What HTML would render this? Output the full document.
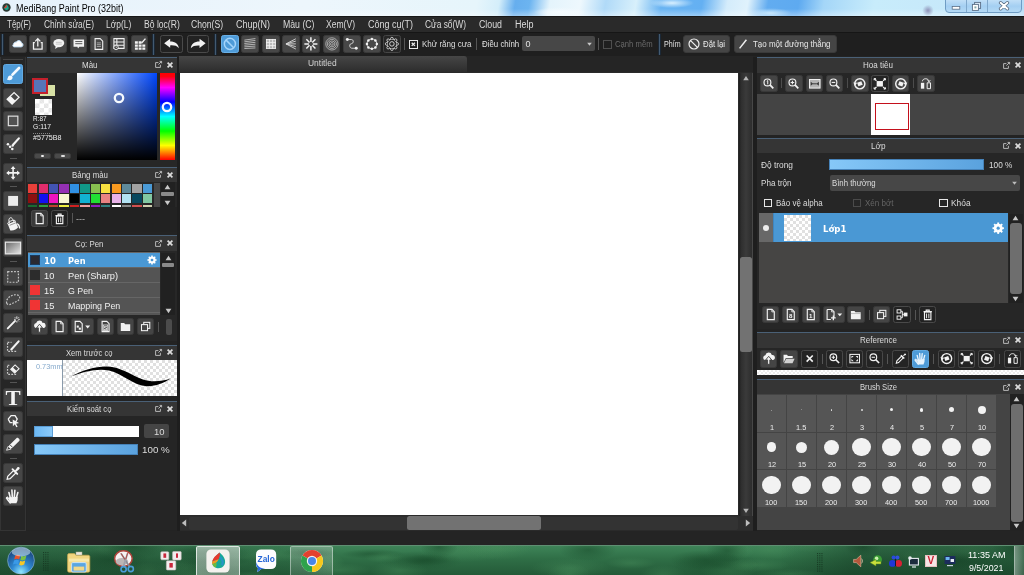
<!DOCTYPE html>
<html lang="vi"><head><meta charset="utf-8"><title>MediBang Paint Pro (32bit)</title>
<style>
html,body{margin:0;padding:0}
body{width:1024px;height:575px;position:relative;overflow:hidden;background:#232323;font-family:"Liberation Sans",sans-serif}
body div,body svg,body span.t{position:absolute;box-sizing:border-box}
span.t{white-space:nowrap;transform-origin:0 50%;display:block}
</style></head><body><div id="w" style="left:0;top:0;width:1024px;height:575px;will-change:transform">
<div style="left:0.00px;top:0.00px;width:1024.00px;height:15.90px;background:linear-gradient(to bottom,rgba(255,255,255,0) 55%,rgba(255,255,255,.35) 100%),radial-gradient(ellipse 26px 5px at 560px 12px,#f4fbff 0,rgba(244,251,255,0) 100%),radial-gradient(ellipse 22px 5px at 672px 3px,#d8efff 0,rgba(216,239,255,0) 100%),radial-gradient(ellipse 22px 5px at 770px 13px,#b8e0fb 0,rgba(184,224,251,0) 100%),linear-gradient(100deg,#e6f2fb 0,#edf6fc 300px,#e6f5fb 470px,#d4eefa 492px,#66aeee 508px,#6cb4f0 522px,#e4f4fc 542px,#eef8fd 572px,#b0daf8 597px,#d8f0fb 627px,#6ab4f2 652px,#64b0f2 692px,#d4ecfb 717px,#e0f2fc 737px,#62acf0 757px,#5eaaf0 787px,#a4d6f8 812px,#c8ecfb 862px,#c6e8fa 942px,#b4daf6 1024px);"></div>
<svg style="left:1.60px;top:3.00px;" width="9.00" height="9.00" viewBox="0 0 10 10"><circle cx="5" cy="5" r="4.6" fill="#2a3a34"/><path d="M5 1.6C7.5 3.4 7.8 5.2 7.2 6.6A2.6 2.6 0 0 1 2.6 6.2C2.4 4.6 3.6 3.4 5 1.6Z" fill="#18a890"/><path d="M5 1.6C3.6 3.4 2.4 4.6 2.6 6.2L5.4 4.6Z" fill="#e83828"/></svg>
<span class="t" style="left:16.30px;top:2.80px;font-size:10px;line-height:12.00px;color:#000;font-family:'Liberation Sans',sans-serif;transform:scaleX(0.8945);">MediBang Paint Pro (32bit)</span>
<div style="left:945.00px;top:-2.00px;width:76.50px;height:14.70px;border:1px solid #6f9cc4;border-radius:0 0 4px 4px;background:linear-gradient(#c6e2f8,#a4cff2 55%,#b4daf6);"></div>
<div style="left:965.60px;top:0.00px;width:1.00px;height:12.00px;background:#7fa8cc;"></div>
<div style="left:987.00px;top:0.00px;width:1.00px;height:12.00px;background:#7fa8cc;"></div>
<svg style="left:951.00px;top:3.00px;" width="10.00" height="8.00" viewBox="0 0 10 8"><rect x="1.2" y="3.4" width="7.6" height="2.8" fill="#fff" stroke="#5a6e86" stroke-width=".8"/></svg>
<svg style="left:971.00px;top:0.50px;" width="11.00" height="11.00" viewBox="0 0 11 11"><rect x="3.6" y="1.4" width="6" height="6" fill="#dceaf8" stroke="#5a6e86" stroke-width=".9"/><rect x="1.4" y="3.4" width="6" height="6" fill="#fff" stroke="#5a6e86" stroke-width=".9"/><rect x="3.4" y="5.4" width="2" height="2" fill="#8aa" /></svg>
<svg style="left:998.00px;top:1.40px;" width="12.00" height="10.00" viewBox="0 0 12 10"><path d="M2.6 1.8L9.4 7.8M9.4 1.8L2.6 7.8" stroke="#56697f" stroke-width="3.4" stroke-linecap="round"/><path d="M2.6 1.8L9.4 7.8M9.4 1.8L2.6 7.8" stroke="#fff" stroke-width="1.9" stroke-linecap="round"/></svg>
<div style="left:922.00px;top:5.00px;width:12.00px;height:11.00px;background:radial-gradient(circle,#8e92b8 0,rgba(142,146,184,0) 70%);"></div>
<div style="left:0.00px;top:15.90px;width:1024.00px;height:17.50px;background:#2a2a2a;"></div>
<div style="left:0.00px;top:15.90px;width:1024.00px;height:0.70px;background:#181818;"></div>
<span class="t" style="left:7.00px;top:19.10px;font-size:10px;line-height:12.00px;color:#dadada;font-family:'Liberation Sans',sans-serif;transform:scaleX(0.8000);">Tệp(F)</span>
<span class="t" style="left:43.70px;top:19.10px;font-size:10px;line-height:12.00px;color:#dadada;font-family:'Liberation Sans',sans-serif;transform:scaleX(0.8404);">Chỉnh sửa(E)</span>
<span class="t" style="left:105.70px;top:19.10px;font-size:10px;line-height:12.00px;color:#dadada;font-family:'Liberation Sans',sans-serif;transform:scaleX(0.8460);">Lớp(L)</span>
<span class="t" style="left:143.70px;top:19.10px;font-size:10px;line-height:12.00px;color:#dadada;font-family:'Liberation Sans',sans-serif;transform:scaleX(0.8590);">Bộ lọc(R)</span>
<span class="t" style="left:191.00px;top:19.10px;font-size:10px;line-height:12.00px;color:#dadada;font-family:'Liberation Sans',sans-serif;transform:scaleX(0.8593);">Chọn(S)</span>
<span class="t" style="left:236.00px;top:19.10px;font-size:10px;line-height:12.00px;color:#dadada;font-family:'Liberation Sans',sans-serif;transform:scaleX(0.8997);">Chụp(N)</span>
<span class="t" style="left:282.50px;top:19.10px;font-size:10px;line-height:12.00px;color:#dadada;font-family:'Liberation Sans',sans-serif;transform:scaleX(0.8722);">Màu (C)</span>
<span class="t" style="left:326.00px;top:19.10px;font-size:10px;line-height:12.00px;color:#dadada;font-family:'Liberation Sans',sans-serif;transform:scaleX(0.8556);">Xem(V)</span>
<span class="t" style="left:367.50px;top:19.10px;font-size:10px;line-height:12.00px;color:#dadada;font-family:'Liberation Sans',sans-serif;transform:scaleX(0.8997);">Công cụ(T)</span>
<span class="t" style="left:425.00px;top:19.10px;font-size:10px;line-height:12.00px;color:#dadada;font-family:'Liberation Sans',sans-serif;transform:scaleX(0.8382);">Cửa sổ(W)</span>
<span class="t" style="left:478.50px;top:19.10px;font-size:10px;line-height:12.00px;color:#dadada;font-family:'Liberation Sans',sans-serif;transform:scaleX(0.8803);">Cloud</span>
<span class="t" style="left:514.50px;top:19.10px;font-size:10px;line-height:12.00px;color:#dadada;font-family:'Liberation Sans',sans-serif;transform:scaleX(0.8995);">Help</span>
<div style="left:0.00px;top:32.20px;width:1024.00px;height:24.00px;background:#1f1f1f;"></div>
<div style="left:0.00px;top:32.20px;width:1024.00px;height:1.20px;background:#161616;"></div>
<div style="left:1.00px;top:34.00px;width:3.20px;height:21.00px;background:#435a70;border-left:1px solid #1b2836;border-right:1px solid #1b2836;"></div>
<div style="left:152.00px;top:34.00px;width:3.20px;height:21.00px;background:#435a70;border-left:1px solid #1b2836;border-right:1px solid #1b2836;"></div>
<div style="left:213.50px;top:34.00px;width:3.20px;height:21.00px;background:#435a70;border-left:1px solid #1b2836;border-right:1px solid #1b2836;"></div>
<div style="left:658.00px;top:34.00px;width:3.20px;height:21.00px;background:#435a70;border-left:1px solid #1b2836;border-right:1px solid #1b2836;"></div>
<div style="left:9.00px;top:35.00px;width:17.60px;height:17.80px;background:#474747;border:1px solid #3a3a3a;border-radius:2.5px;"></div>
<svg style="left:9.00px;top:35.00px;" width="17.60" height="17.80" viewBox="0 0 18 18"><g transform="translate(9 9.2) scale(.8) translate(-9.3 -9)"><path d="M4.6 12.6h9a2.6 2.6 0 0 0 .5-5.1 3.6 3.6 0 0 0-6.8-1A2.6 2.6 0 0 0 4 9a1.9 1.9 0 0 0 .6 3.6z" fill="#fff" stroke="#bcdcf4" stroke-width="1.2"/></g></svg>
<div style="left:29.27px;top:35.00px;width:17.60px;height:17.80px;background:#474747;border:1px solid #3a3a3a;border-radius:2.5px;"></div>
<svg style="left:29.27px;top:35.00px;" width="17.60" height="17.80" viewBox="0 0 18 18"><path d="M6 7.6H4.6V14.4H13.4V7.6H12" fill="none" stroke="#f2f2f2" stroke-width="1.3"/><path d="M9 11.6V4.2M6.4 6.4L9 3.6L11.6 6.4" fill="none" stroke="#f2f2f2" stroke-width="1.3"/></svg>
<div style="left:49.54px;top:35.00px;width:17.60px;height:17.80px;background:#474747;border:1px solid #3a3a3a;border-radius:2.5px;"></div>
<svg style="left:49.54px;top:35.00px;" width="17.60" height="17.80" viewBox="0 0 18 18"><ellipse cx="9" cy="8.2" rx="5.6" ry="4.2" fill="#f2f2f2"/><path d="M6 11l-.8 3.2 3.4-2.4z" fill="#f2f2f2"/><path d="M6 7.4h6M6 9.2h6" stroke="#999" stroke-width=".5"/></svg>
<div style="left:69.81px;top:35.00px;width:17.60px;height:17.80px;background:#474747;border:1px solid #3a3a3a;border-radius:2.5px;"></div>
<svg style="left:69.81px;top:35.00px;" width="17.60" height="17.80" viewBox="0 0 18 18"><path d="M3.6 4.4h10.8v7.4H9.6l-1.4 2-.6-2H3.6z" fill="#f2f2f2"/><path d="M5.4 6.6h7.2M5.4 8.8h7.2" stroke="#555" stroke-width="1"/></svg>
<div style="left:90.08px;top:35.00px;width:17.60px;height:17.80px;background:#474747;border:1px solid #3a3a3a;border-radius:2.5px;"></div>
<svg style="left:90.08px;top:35.00px;" width="17.60" height="17.80" viewBox="0 0 18 18"><path d="M5.2 3.6h5.2l2.6 2.6v8.4H5.2z" fill="none" stroke="#f2f2f2" stroke-width="1.1"/><path d="M7 8h4.2M7 9.8h4.2M7 11.6h4.2" stroke="#ccc" stroke-width=".7"/></svg>
<div style="left:110.35px;top:35.00px;width:17.60px;height:17.80px;background:#474747;border:1px solid #3a3a3a;border-radius:2.5px;"></div>
<svg style="left:110.35px;top:35.00px;" width="17.60" height="17.80" viewBox="0 0 18 18"><path d="M4 3.6h10.4v10H4zM4 7h10.4M4 10.4h10.4M7 3.6v10" fill="none" stroke="#f2f2f2" stroke-width="1.1"/><circle cx="6.2" cy="12.6" r="2.3" fill="#474747" stroke="#f2f2f2" stroke-width=".9"/><path d="M6.2 11.4v1.3h1" stroke="#f2f2f2" stroke-width=".6" fill="none"/></svg>
<div style="left:130.62px;top:35.00px;width:17.60px;height:17.80px;background:#474747;border:1px solid #3a3a3a;border-radius:2.5px;"></div>
<svg style="left:130.62px;top:35.00px;" width="17.60" height="17.80" viewBox="0 0 18 18"><path d="M4 6.4h3v2.4H4zM7.8 6.4h3v2.4h-3zM4 9.6h3V12H4zM7.8 9.6h3V12h-3zM11.6 9.6h3V12h-3zM4 12.8h3v2.2H4zM7.8 12.8h3v2.2h-3zM11.6 12.8h3v2.2h-3z" fill="#f2f2f2"/><path d="M10.8 8.2l4-4.6" stroke="#f2f2f2" stroke-width="1.5"/></svg>
<div style="left:160.00px;top:35.00px;width:22.60px;height:17.80px;background:#222;border:1px solid #4a4a4a;border-radius:2.5px;"></div>
<svg style="left:160.00px;top:35.00px;" width="22.60" height="17.80" viewBox="0 0 24 18"><path d="M4.4 8.4L10.8 3.6V6.4C16.2 6.4 19.6 9 20 13.6 17.8 11 15.2 10.4 10.8 10.6V13.2z" fill="#f2f2f2"/></svg>
<div style="left:186.50px;top:35.00px;width:22.80px;height:17.80px;background:#222;border:1px solid #4a4a4a;border-radius:2.5px;"></div>
<svg style="left:186.50px;top:35.00px;" width="22.80" height="17.80" viewBox="0 0 24 18"><path d="M19.6 8.4L13.2 3.6V6.4C7.8 6.4 4.4 9 4 13.6 6.2 11 8.8 10.4 13.2 10.6V13.2z" fill="#f2f2f2"/></svg>
<div style="left:221.20px;top:35.00px;width:17.80px;height:17.80px;background:#4e9bd8;border:1px solid #6ab0e6;border-radius:2.5px;"></div>
<svg style="left:221.20px;top:35.00px;" width="17.80" height="17.80" viewBox="0 0 18 18"><circle cx="9" cy="9" r="5.6" fill="none" stroke="#a4d4fa" stroke-width="1.5"/><path d="M5.2 5.2l7.6 7.6" stroke="#a4d4fa" stroke-width="1.5"/></svg>
<div style="left:241.47px;top:35.00px;width:17.80px;height:17.80px;background:#474747;border:1px solid #3a3a3a;border-radius:2.5px;"></div>
<svg style="left:241.47px;top:35.00px;" width="17.80" height="17.80" viewBox="0 0 18 18"><path d="M3.4 5.2L14.6 3.6" stroke="#cfcfcf" stroke-width=".8"/><path d="M3.4 6.9L14.6 5.5" stroke="#cfcfcf" stroke-width=".8"/><path d="M3.4 8.6L14.6 7.4" stroke="#cfcfcf" stroke-width=".8"/><path d="M3.4 10.3L14.6 9.299999999999999" stroke="#cfcfcf" stroke-width=".8"/><path d="M3.4 12.0L14.6 11.2" stroke="#cfcfcf" stroke-width=".8"/><path d="M3.4 13.7L14.6 13.1" stroke="#cfcfcf" stroke-width=".8"/></svg>
<div style="left:261.74px;top:35.00px;width:17.80px;height:17.80px;background:#474747;border:1px solid #3a3a3a;border-radius:2.5px;"></div>
<svg style="left:261.74px;top:35.00px;" width="17.80" height="17.80" viewBox="0 0 18 18"><path d="M4.6 4v10" stroke="#f0f0f0" stroke-width=".9"/><path d="M6.1 4v10" stroke="#f0f0f0" stroke-width=".9"/><path d="M7.6 4v10" stroke="#f0f0f0" stroke-width=".9"/><path d="M9.1 4v10" stroke="#f0f0f0" stroke-width=".9"/><path d="M10.6 4v10" stroke="#f0f0f0" stroke-width=".9"/><path d="M12.1 4v10" stroke="#f0f0f0" stroke-width=".9"/><path d="M13.6 4v10" stroke="#f0f0f0" stroke-width=".9"/><path d="M4 4.6h10" stroke="#f0f0f0" stroke-width=".9"/><path d="M4 6.1h10" stroke="#f0f0f0" stroke-width=".9"/><path d="M4 7.6h10" stroke="#f0f0f0" stroke-width=".9"/><path d="M4 9.1h10" stroke="#f0f0f0" stroke-width=".9"/><path d="M4 10.6h10" stroke="#f0f0f0" stroke-width=".9"/><path d="M4 12.1h10" stroke="#f0f0f0" stroke-width=".9"/><path d="M4 13.6h10" stroke="#f0f0f0" stroke-width=".9"/></svg>
<div style="left:282.01px;top:35.00px;width:17.80px;height:17.80px;background:#474747;border:1px solid #3a3a3a;border-radius:2.5px;"></div>
<svg style="left:282.01px;top:35.00px;" width="17.80" height="17.80" viewBox="0 0 18 18"><path d="M4 9L14 3.8M4 9L14 6.2M4 9L14 9M4 9L14 11.8M4 9L14 14.2" stroke="#d8d8d8" stroke-width=".9"/></svg>
<div style="left:302.28px;top:35.00px;width:17.80px;height:17.80px;background:#474747;border:1px solid #3a3a3a;border-radius:2.5px;"></div>
<svg style="left:302.28px;top:35.00px;" width="17.80" height="17.80" viewBox="0 0 18 18"><path d="M9 2.4V7M9 11v4.6M2.4 9H7M11 9h4.6M4.4 4.4l3.2 3.2M10.4 10.4L13.6 13.6M13.6 4.4l-3.2 3.2M7.6 10.4L4.4 13.6" stroke="#f2f2f2" stroke-width="1.5"/></svg>
<div style="left:322.55px;top:35.00px;width:17.80px;height:17.80px;background:#474747;border:1px solid #3a3a3a;border-radius:2.5px;"></div>
<svg style="left:322.55px;top:35.00px;" width="17.80" height="17.80" viewBox="0 0 18 18"><circle cx="9" cy="9" r="1.4" fill="none" stroke="#d0d0d0" stroke-width=".7"/><circle cx="9" cy="9" r="3" fill="none" stroke="#d0d0d0" stroke-width=".7"/><circle cx="9" cy="9" r="4.6" fill="none" stroke="#d0d0d0" stroke-width=".7"/><circle cx="9" cy="9" r="6.2" fill="none" stroke="#d0d0d0" stroke-width=".7"/></svg>
<div style="left:342.82px;top:35.00px;width:17.80px;height:17.80px;background:#474747;border:1px solid #3a3a3a;border-radius:2.5px;"></div>
<svg style="left:342.82px;top:35.00px;" width="17.80" height="17.80" viewBox="0 0 18 18"><path d="M4.6 4.6H8.6C11 4.6 11 8.8 8.4 8.8 6 8.8 6.4 13.4 9 13.4H13" fill="none" stroke="#e0e0e0" stroke-width=".9"/><circle cx="4.4" cy="4.6" r="1.5" fill="#f2f2f2"/><circle cx="13.4" cy="13.4" r="1.5" fill="#f2f2f2"/></svg>
<div style="left:363.09px;top:35.00px;width:17.80px;height:17.80px;background:#474747;border:1px solid #3a3a3a;border-radius:2.5px;"></div>
<svg style="left:363.09px;top:35.00px;" width="17.80" height="17.80" viewBox="0 0 18 18"><circle cx="9" cy="9" r="5" fill="none" stroke="#e0e0e0" stroke-width=".9"/><circle cx="14.00" cy="9.00" r="1.25" fill="#f2f2f2"/><circle cx="12.54" cy="12.54" r="1.25" fill="#f2f2f2"/><circle cx="9.00" cy="14.00" r="1.25" fill="#f2f2f2"/><circle cx="5.46" cy="12.54" r="1.25" fill="#f2f2f2"/><circle cx="4.00" cy="9.00" r="1.25" fill="#f2f2f2"/><circle cx="5.46" cy="5.46" r="1.25" fill="#f2f2f2"/><circle cx="9.00" cy="4.00" r="1.25" fill="#f2f2f2"/><circle cx="12.54" cy="5.46" r="1.25" fill="#f2f2f2"/></svg>
<div style="left:383.36px;top:35.00px;width:17.80px;height:17.80px;background:#262626;border:1px solid #454545;border-radius:2.5px;"></div>
<svg style="left:383.36px;top:35.00px;" width="17.80" height="17.80" viewBox="0 0 18 18"><circle cx="9" cy="9" r="4.9" fill="none" stroke="#e4e4e4" stroke-width=".9"/><circle cx="14.30" cy="9.00" r="1.35" fill="#262626" stroke="#e4e4e4" stroke-width=".8"/><circle cx="12.75" cy="12.75" r="1.35" fill="#262626" stroke="#e4e4e4" stroke-width=".8"/><circle cx="9.00" cy="14.30" r="1.35" fill="#262626" stroke="#e4e4e4" stroke-width=".8"/><circle cx="5.25" cy="12.75" r="1.35" fill="#262626" stroke="#e4e4e4" stroke-width=".8"/><circle cx="3.70" cy="9.00" r="1.35" fill="#262626" stroke="#e4e4e4" stroke-width=".8"/><circle cx="5.25" cy="5.25" r="1.35" fill="#262626" stroke="#e4e4e4" stroke-width=".8"/><circle cx="9.00" cy="3.70" r="1.35" fill="#262626" stroke="#e4e4e4" stroke-width=".8"/><circle cx="12.75" cy="5.25" r="1.35" fill="#262626" stroke="#e4e4e4" stroke-width=".8"/><circle cx="9" cy="9" r="4.2" fill="#262626"/><circle cx="9" cy="9" r="2.3" fill="none" stroke="#e4e4e4" stroke-width=".9"/></svg>
<div style="left:404.40px;top:38.00px;width:1.00px;height:12.00px;background:#555;"></div>
<div style="left:409.00px;top:40.00px;width:8.60px;height:8.60px;border:1px solid #e8e8e8;background:transparent;"></div>
<svg style="left:409.00px;top:40.00px;" width="8.60" height="8.60" viewBox="0 0 8.6 8.6"><path d="M2.7 2.7L5.9 5.9M5.9 2.7L2.7 5.9" stroke="#e8e8e8" stroke-width="1.3"/></svg>
<span class="t" style="left:421.50px;top:38.90px;font-size:9px;line-height:10.80px;color:#dcdcdc;font-family:'Liberation Sans',sans-serif;transform:scaleX(0.8906);">Khử răng cưa</span>
<div style="left:475.60px;top:38.00px;width:1.00px;height:12.00px;background:#555;"></div>
<span class="t" style="left:481.60px;top:38.90px;font-size:9px;line-height:10.80px;color:#e0e0e0;font-family:'Liberation Sans',sans-serif;transform:scaleX(0.8747);">Điều chỉnh</span>
<div style="left:522.40px;top:35.50px;width:72.60px;height:15.80px;background:#474747;border-radius:2px;"></div>
<span class="t" style="left:525.50px;top:38.90px;font-size:9px;line-height:10.80px;color:#e0e0e0;font-family:'Liberation Sans',sans-serif;transform:scaleX(1.0000);">0</span>
<svg style="left:585.50px;top:42.00px;" width="7.00" height="5.00" viewBox="0 0 7 5"><path d="M1.2 .8h4.6L3.5 3.8z" fill="#c8c8c8"/></svg>
<div style="left:598.00px;top:38.00px;width:1.00px;height:12.00px;background:#555;"></div>
<div style="left:603.00px;top:40.00px;width:8.60px;height:8.60px;border:1px solid #4e4e4e;background:transparent;"></div>
<span class="t" style="left:615.40px;top:38.90px;font-size:9px;line-height:10.80px;color:#686868;font-family:'Liberation Sans',sans-serif;transform:scaleX(0.8542);">Cạnh mềm</span>
<span class="t" style="left:664.00px;top:38.90px;font-size:9px;line-height:10.80px;color:#e0e0e0;font-family:'Liberation Sans',sans-serif;transform:scaleX(0.7902);">Phím</span>
<div style="left:682.70px;top:35.00px;width:47.70px;height:17.80px;background:#454545;border-radius:3px;border:1px solid #3a3a3a;"></div>
<svg style="left:686.50px;top:37.00px;" width="14.00" height="14.00" viewBox="0 0 14 14"><circle cx="7" cy="7" r="5" fill="none" stroke="#eee" stroke-width="1.2"/><path d="M3.6 3.6l6.8 6.8" stroke="#eee" stroke-width="1.2"/></svg>
<span class="t" style="left:702.50px;top:38.90px;font-size:9px;line-height:10.80px;color:#e8e8e8;font-family:'Liberation Sans',sans-serif;transform:scaleX(0.8663);">Đặt lại</span>
<div style="left:734.00px;top:35.00px;width:102.80px;height:17.80px;background:#454545;border-radius:3px;border:1px solid #3a3a3a;"></div>
<svg style="left:738.00px;top:38.00px;" width="10.00" height="12.00" viewBox="0 0 10 12"><path d="M1.6 10.4L8.4 1.8" stroke="#f0f0f0" stroke-width="1.5"/></svg>
<span class="t" style="left:752.50px;top:38.90px;font-size:9px;line-height:10.80px;color:#e8e8e8;font-family:'Liberation Sans',sans-serif;transform:scaleX(0.8859);">Tạo một đường thẳng</span>
<div style="left:0.00px;top:56.50px;width:1024.00px;height:474.00px;background:#232323;"></div>
<div style="left:0.00px;top:56.50px;width:26.00px;height:474.00px;background:#262626;border:1px solid #343434;border-top:none;"></div>
<div style="left:3.00px;top:59.30px;width:20.00px;height:1.00px;background:#444;"></div>
<div style="left:3.00px;top:64.30px;width:20.20px;height:19.80px;background:#4e9bd8;border:1px solid #62aae2;border-radius:2.5px;"></div>
<svg style="left:3.00px;top:64.30px;" width="20.20" height="19.80" viewBox="0 0 20 20"><path d="M16 4L9.4 10.8" stroke="#f4faff" stroke-width="2.7" stroke-linecap="round"/><path d="M3.8 15.6c.8-.6.8-1.6 1.2-2.6.6-1.6 2.6-2 3.8-.8 1.2 1.2.8 3-.6 3.8-1.4.6-3 .4-4.4-.4z" fill="#f4faff"/></svg>
<div style="left:3.00px;top:87.90px;width:20.20px;height:19.80px;background:#464646;border:1px solid #393939;border-radius:2.5px;"></div>
<svg style="left:3.00px;top:87.90px;" width="20.20" height="19.80" viewBox="0 0 20 20"><path d="M4 11.4L11 4.6L16 9.4L9 16.2z" fill="none" stroke="#f4f4f4" stroke-width="1.3"/><path d="M4 11.4L7.4 8.2L12.4 13L9 16.2z" fill="#f4f4f4"/></svg>
<div style="left:3.00px;top:111.20px;width:20.20px;height:19.80px;background:#464646;border:1px solid #393939;border-radius:2.5px;"></div>
<svg style="left:3.00px;top:111.20px;" width="20.20" height="19.80" viewBox="0 0 20 20"><rect x="5.2" y="5.2" width="9.6" height="9.6" fill="#525252" stroke="#e0e0e0" stroke-width="1.2"/></svg>
<div style="left:3.00px;top:134.40px;width:20.20px;height:19.80px;background:#464646;border:1px solid #393939;border-radius:2.5px;"></div>
<svg style="left:3.00px;top:134.40px;" width="20.20" height="19.80" viewBox="0 0 20 20"><path d="M15.8 4.4L10.2 10.6" stroke="#f4f4f4" stroke-width="2.2" stroke-linecap="round"/><circle cx="4.8" cy="10.4" r="1.3" fill="#f4f4f4"/><circle cx="7" cy="12.8" r="1.3" fill="#f4f4f4"/><circle cx="9.2" cy="15.2" r="1.3" fill="#f4f4f4"/><circle cx="9.6" cy="11.6" r="1.2" fill="#f4f4f4"/></svg>
<div style="left:9.50px;top:158.10px;width:7.00px;height:1.00px;background:#555;"></div>
<div style="left:3.00px;top:162.60px;width:20.20px;height:19.80px;background:#464646;border:1px solid #393939;border-radius:2.5px;"></div>
<svg style="left:3.00px;top:162.60px;" width="20.20" height="19.80" viewBox="0 0 20 20"><path d="M10 3L12.4 6H10.8V9.2H14V7.6L17 10L14 12.4V10.8H10.8V14H12.4L10 17L7.6 14H9.2V10.8H6V12.4L3 10L6 7.6V9.2H9.2V6H7.6z" fill="#f4f4f4"/></svg>
<div style="left:9.50px;top:186.40px;width:7.00px;height:1.00px;background:#555;"></div>
<div style="left:3.00px;top:190.80px;width:20.20px;height:19.80px;background:#464646;border:1px solid #393939;border-radius:2.5px;"></div>
<svg style="left:3.00px;top:190.80px;" width="20.20" height="19.80" viewBox="0 0 20 20"><rect x="5" y="5" width="10" height="10" fill="#ececec"/></svg>
<div style="left:3.00px;top:214.30px;width:20.20px;height:19.80px;background:#464646;border:1px solid #393939;border-radius:2.5px;"></div>
<svg style="left:3.00px;top:214.30px;" width="20.20" height="19.80" viewBox="0 0 20 20"><path d="M4.6 10.2L12.4 7L15 13.4C14 15.6 9.6 17.4 7.2 16.6z" fill="#f4f4f4"/><path d="M4.6 10.2c-.4-1 1-2.400000000000001 3.2-3.200000000000001s4.2-.8 4.6 0" fill="none" stroke="#f4f4f4" stroke-width="1"/><path d="M6.4 9.4C5.2 6.6 5.8 4.2 7.2 3.8 8.6 3.4 9.8 5 10.6 7.8" fill="none" stroke="#f4f4f4" stroke-width="1"/><path d="M6.6 11.4l6-2.4" stroke="#666" stroke-width=".7"/><path d="M14 9.2c1.8.6 3 2.200000000000001 3.2 4.6.2 1.2-1.4 1.2-1.4 0-.2-1.600000000000001-.8-2.6-1.8-3.200000000000001z" fill="#f4f4f4"/></svg>
<div style="left:3.00px;top:237.50px;width:20.20px;height:19.80px;background:#464646;border:1px solid #393939;border-radius:2.5px;"></div>
<svg style="left:3.00px;top:237.50px;" width="20.20" height="19.80" viewBox="0 0 20 20"><defs><linearGradient id="gg" x1="0" y1="0" x2="1" y2="1"><stop offset="0" stop-color="#666"/><stop offset="1" stop-color="#e8e8e8"/></linearGradient></defs><rect x="2.2" y="4.2" width="15.4" height="11.8" fill="url(#gg)" stroke="#e4e4e4" stroke-width="1.3"/></svg>
<div style="left:9.50px;top:260.90px;width:7.00px;height:1.00px;background:#555;"></div>
<div style="left:3.00px;top:266.60px;width:20.20px;height:19.80px;background:#464646;border:1px solid #393939;border-radius:2.5px;"></div>
<svg style="left:3.00px;top:266.60px;" width="20.20" height="19.80" viewBox="0 0 20 20"><rect x="4.6" y="4.6" width="10.8" height="10.8" fill="none" stroke="#c4c4c4" stroke-width="1.2" stroke-dasharray="1.8 1.4"/></svg>
<div style="left:3.00px;top:290.20px;width:20.20px;height:19.80px;background:#464646;border:1px solid #393939;border-radius:2.5px;"></div>
<svg style="left:3.00px;top:290.20px;" width="20.20" height="19.80" viewBox="0 0 20 20"><path d="M3.6 13.4C2.4 10.4 5.6 6.2 10.6 5c3.800000000000001-.8 6.600000000000001.8 6 3.4-.8 3-4.8 3.8-7.2 5.2-2 1.2-4.8 1.8-5.800000000000001-.2z" fill="none" stroke="#c4c4c4" stroke-width="1.2" stroke-dasharray="1.8 1.3"/></svg>
<div style="left:3.00px;top:313.40px;width:20.20px;height:19.80px;background:#464646;border:1px solid #393939;border-radius:2.5px;"></div>
<svg style="left:3.00px;top:313.40px;" width="20.20" height="19.80" viewBox="0 0 20 20"><path d="M4.6 15.6L12 8" stroke="#f4f4f4" stroke-width="1.9" stroke-linecap="round"/><path d="M13.8 3.4v2.4M13.8 8v1.6M11 6.4h1.6M15.2 6.4h1.6M11.8 4.4l1 1M15.8 4.4l-1 1M15.8 8.4l-1-1" stroke="#f4f4f4" stroke-width=".9"/></svg>
<div style="left:3.00px;top:337.00px;width:20.20px;height:19.80px;background:#464646;border:1px solid #393939;border-radius:2.5px;"></div>
<svg style="left:3.00px;top:337.00px;" width="20.20" height="19.80" viewBox="0 0 20 20"><path d="M4.4 6v8.6h8.8" fill="none" stroke="#c8c8c8" stroke-width="1.2" stroke-dasharray="1.8 1.3"/><path d="M4.4 5.4h4" fill="none" stroke="#c8c8c8" stroke-width="1.2" stroke-dasharray="1.8 1.3"/><path d="M15.6 4.4L8.2 12.6" stroke="#f4f4f4" stroke-width="2.1" stroke-linecap="round"/></svg>
<div style="left:3.00px;top:360.20px;width:20.20px;height:19.80px;background:#464646;border:1px solid #393939;border-radius:2.5px;"></div>
<svg style="left:3.00px;top:360.20px;" width="20.20" height="19.80" viewBox="0 0 20 20"><path d="M4.4 6v8.6h8.8" fill="none" stroke="#c8c8c8" stroke-width="1.2" stroke-dasharray="1.8 1.3"/><path d="M4.4 5.4h3" fill="none" stroke="#c8c8c8" stroke-width="1.2" stroke-dasharray="1.8 1.3"/><path d="M7.6 9.4L12 5L16 8.8L11.6 13.2z" fill="none" stroke="#f4f4f4" stroke-width="1.1"/><path d="M7.6 9.4L9.6 7.4L13.6 11.2L11.6 13.2z" fill="#f4f4f4"/></svg>
<div style="left:9.50px;top:382.10px;width:7.00px;height:1.00px;background:#555;"></div>
<div style="left:3.00px;top:387.60px;width:20.20px;height:19.80px;background:#464646;border:1px solid #393939;border-radius:2.5px;"></div>
<svg style="left:3.00px;top:387.60px;" width="20.20" height="19.80" viewBox="0 0 20 20"><text x="10" y="17.2" font-family="Liberation Serif,serif" font-weight="bold" font-size="20.5" fill="#f4f4f4" text-anchor="middle" transform="translate(10 0) scale(1.12 1) translate(-10 0)">T</text></svg>
<div style="left:3.00px;top:411.00px;width:20.20px;height:19.80px;background:#464646;border:1px solid #393939;border-radius:2.5px;"></div>
<svg style="left:3.00px;top:411.00px;" width="20.20" height="19.80" viewBox="0 0 20 20"><path d="M5 8.2L8 4.600000000000001H12L14.2 8.2 12.4 11.4" fill="none" stroke="#f4f4f4" stroke-width="1.3"/><path d="M5 8.2L7 11.8H9.4" fill="none" stroke="#f4f4f4" stroke-width="1.3"/><path d="M9.6 8.6L16 12.2L13 12.8L14.6 15.8L13.2 16.4L11.8 13.4L9.8 15.4z" fill="#f4f4f4"/></svg>
<div style="left:3.00px;top:434.40px;width:20.20px;height:19.80px;background:#464646;border:1px solid #393939;border-radius:2.5px;"></div>
<svg style="left:3.00px;top:434.40px;" width="20.20" height="19.80" viewBox="0 0 20 20"><path d="M3.4 16.4L6.2 11.4L13.6 4C14.6 3 17.4 5.6 16.4 6.8L9 14.2z" fill="#f4f4f4"/><path d="M6.8 10.8L9.6 13.6" stroke="#4a4a4a" stroke-width="1"/><path d="M3.4 16.4L8 15.2L5 12.4z" fill="#4a4a4a" stroke="#f4f4f4" stroke-width=".8"/></svg>
<div style="left:9.50px;top:457.50px;width:7.00px;height:1.00px;background:#555;"></div>
<div style="left:3.00px;top:463.00px;width:20.20px;height:19.80px;background:#464646;border:1px solid #393939;border-radius:2.5px;"></div>
<svg style="left:3.00px;top:463.00px;" width="20.20" height="19.80" viewBox="0 0 20 20"><path d="M4 16.4L4.6 13.4L10.4 7.6L12.8 10L7 15.8z" fill="none" stroke="#f4f4f4" stroke-width="1.2"/><path d="M9.4 6.2L14.2 11" stroke="#f4f4f4" stroke-width="1.9" stroke-linecap="round"/><path d="M11.6 8L14.4 4.4C15.6 3 17.6 5 16.2 6.2L12.8 9.2z" fill="#f4f4f4"/></svg>
<div style="left:3.00px;top:486.20px;width:20.20px;height:19.80px;background:#464646;border:1px solid #393939;border-radius:2.5px;"></div>
<svg style="left:3.00px;top:486.20px;" width="20.20" height="19.80" viewBox="0 0 20 20"><path d="M7 17C6 15.4 4.6 14 3.4 12.2" fill="none" stroke="#f4f4f4" stroke-width="1.7" stroke-linecap="round"/><path d="M7.2 12L5.8 6.6M9.2 11L8.8 4.2M11.2 11L11.8 4.4M13.4 11.6L14.8 6.6" fill="none" stroke="#f4f4f4" stroke-width="1.6" stroke-linecap="round"/><path d="M5.8 11.4L14.6 10.8V13.4C14.6 15.2 13.8 16.2 13.4 17.4H7C6.6 16 5.8 14.6 5.8 13z" fill="#f4f4f4"/><path d="M3.4 12.2C3 11 4.4 10.6 5 11.6L6.4 13.6" fill="#f4f4f4" stroke="#f4f4f4" stroke-width="1"/></svg>
<div style="left:27.00px;top:56.50px;width:149.50px;height:474.00px;background:#232323;"></div>
<div style="left:27.00px;top:57.00px;width:149.50px;height:15.50px;background:#353535;border-top:1.1px solid #4a6076;"></div>
<span class="t" style="left:81.75px;top:60.15px;font-size:9px;line-height:10.80px;color:#dcdcdc;font-family:'Liberation Sans',sans-serif;transform:scaleX(0.8853);">Màu</span>
<svg style="left:154.00px;top:60.45px;" width="9.00" height="9.00" viewBox="0 0 9 9"><path d="M4.4 2.6H1.6V7.4H6.4V4.8" fill="none" stroke="#c4c4c4" stroke-width=".9"/><path d="M4.4 4.6L7.4 1.6M5.6 1.4h2v2" fill="none" stroke="#c4c4c4" stroke-width=".9"/></svg>
<svg style="left:166.00px;top:60.95px;" width="8.00" height="8.00" viewBox="0 0 8 8"><path d="M1.6 1.6L6.4 6.4M6.4 1.6L1.6 6.4" stroke="#dcdcdc" stroke-width="1.7"/></svg>
<div style="left:27.00px;top:72.50px;width:149.50px;height:94.00px;background:#272727;"></div>
<div style="left:39.50px;top:85.00px;width:15.00px;height:11.40px;background:#d8e2a6;"></div>
<div style="left:32.30px;top:78.00px;width:15.80px;height:15.60px;background:#5775b8;border:2px solid #c4202c;"></div>
<div style="left:34.80px;top:99.00px;width:17.50px;height:15.60px;background-color:#fff;background-image:linear-gradient(45deg,#e6e6e6 25%,transparent 25%,transparent 75%,#e6e6e6 75%),linear-gradient(45deg,#e6e6e6 25%,transparent 25%,transparent 75%,#e6e6e6 75%);background-size:9px 9px;background-position:0 0,4.5px 4.5px;"></div>
<span class="t" style="left:32.50px;top:114.00px;font-size:8px;line-height:9.60px;color:#eee;font-family:'Liberation Sans',sans-serif;transform:scaleX(0.7989);">R:87</span>
<span class="t" style="left:32.50px;top:122.40px;font-size:8px;line-height:9.60px;color:#eee;font-family:'Liberation Sans',sans-serif;transform:scaleX(0.8491);">G:117</span>
<span class="t" style="left:32.50px;top:133.20px;font-size:8px;line-height:9.60px;color:#eee;font-family:'Liberation Sans',sans-serif;transform:scaleX(0.8897);">#5775B8</span>
<div style="left:32.50px;top:133.00px;width:17.00px;height:1.00px;border-top:1px dotted #888;"></div>
<div style="left:33.80px;top:153.00px;width:17.20px;height:6.40px;background:#4a4a4a;border:1px solid #3a3a3a;border-radius:2px;"></div>
<div style="left:54.00px;top:153.00px;width:17.40px;height:6.40px;background:#4a4a4a;border:1px solid #3a3a3a;border-radius:2px;"></div>
<div style="left:41.40px;top:155.00px;width:2.40px;height:2.40px;background:#eee;border-radius:2px;"></div>
<div style="left:61.40px;top:155.00px;width:3.40px;height:2.40px;background:#ddd;border-radius:1px;"></div>
<div style="left:77.40px;top:73.30px;width:79.60px;height:86.70px;background:linear-gradient(to top,#000 0,rgba(0,0,0,0) 100%),linear-gradient(to right,#fff 0,#0047ff 100%);"></div>
<svg style="left:113.40px;top:91.70px;" width="12.00" height="12.00" viewBox="0 0 12 12"><circle cx="6" cy="6" r="4.2" fill="none" stroke="#f6fafe" stroke-width="2.3"/></svg>
<div style="left:159.80px;top:73.30px;width:15.60px;height:86.70px;background:linear-gradient(to bottom,#ff0000 0,#ff0010 4%,#ff00ff 16.7%,#0000ff 33.3%,#00ffff 50%,#00ff00 66.7%,#ffff00 83.3%,#ff0000 100%);"></div>
<svg style="left:161.00px;top:101.00px;" width="12.00" height="12.00" viewBox="0 0 12 12"><circle cx="6" cy="6" r="4.2" fill="none" stroke="#f6fafe" stroke-width="2.3"/></svg>
<div style="left:27.00px;top:167.00px;width:149.50px;height:14.60px;background:#353535;border-top:1.1px solid #4a6076;"></div>
<span class="t" style="left:71.50px;top:169.70px;font-size:9px;line-height:10.80px;color:#dcdcdc;font-family:'Liberation Sans',sans-serif;transform:scaleX(0.8774);">Bảng màu</span>
<svg style="left:154.00px;top:170.00px;" width="9.00" height="9.00" viewBox="0 0 9 9"><path d="M4.4 2.6H1.6V7.4H6.4V4.8" fill="none" stroke="#c4c4c4" stroke-width=".9"/><path d="M4.4 4.6L7.4 1.6M5.6 1.4h2v2" fill="none" stroke="#c4c4c4" stroke-width=".9"/></svg>
<svg style="left:166.00px;top:170.50px;" width="8.00" height="8.00" viewBox="0 0 8 8"><path d="M1.6 1.6L6.4 6.4M6.4 1.6L1.6 6.4" stroke="#dcdcdc" stroke-width="1.7"/></svg>
<div style="left:27.00px;top:181.60px;width:149.50px;height:50.00px;background:#272727;"></div>
<div style="left:28.20px;top:183.60px;width:9.30px;height:9.40px;background:#e8403a;"></div>
<div style="left:38.62px;top:183.60px;width:9.30px;height:9.40px;background:#e02c6c;"></div>
<div style="left:49.04px;top:183.60px;width:9.30px;height:9.40px;background:#4254b4;"></div>
<div style="left:59.46px;top:183.60px;width:9.30px;height:9.40px;background:#9430b4;"></div>
<div style="left:69.88px;top:183.60px;width:9.30px;height:9.40px;background:#3090e4;"></div>
<div style="left:80.30px;top:183.60px;width:9.30px;height:9.40px;background:#109888;"></div>
<div style="left:90.72px;top:183.60px;width:9.30px;height:9.40px;background:#88c050;"></div>
<div style="left:101.14px;top:183.60px;width:9.30px;height:9.40px;background:#f8e040;"></div>
<div style="left:111.56px;top:183.60px;width:9.30px;height:9.40px;background:#f89a20;"></div>
<div style="left:121.98px;top:183.60px;width:9.30px;height:9.40px;background:#5f8a9a;"></div>
<div style="left:132.40px;top:183.60px;width:9.30px;height:9.40px;background:#a2a2a2;"></div>
<div style="left:142.82px;top:183.60px;width:9.30px;height:9.40px;background:#4a9ad6;"></div>
<div style="left:28.20px;top:194.20px;width:9.30px;height:9.20px;background:#8c1010;"></div>
<div style="left:38.62px;top:194.20px;width:9.30px;height:9.20px;background:#1410f0;"></div>
<div style="left:49.04px;top:194.20px;width:9.30px;height:9.20px;background:#f014c0;"></div>
<div style="left:59.46px;top:194.20px;width:9.30px;height:9.20px;background:#f8f8d2;"></div>
<div style="left:69.88px;top:194.20px;width:9.30px;height:9.20px;background:#000000;"></div>
<div style="left:80.30px;top:194.20px;width:9.30px;height:9.20px;background:#12b2d2;"></div>
<div style="left:90.72px;top:194.20px;width:9.30px;height:9.20px;background:#22e034;"></div>
<div style="left:101.14px;top:194.20px;width:9.30px;height:9.20px;background:#e88282;"></div>
<div style="left:111.56px;top:194.20px;width:9.30px;height:9.20px;background:#e8b2e8;"></div>
<div style="left:121.98px;top:194.20px;width:9.30px;height:9.20px;background:#b2e2f2;"></div>
<div style="left:132.40px;top:194.20px;width:9.30px;height:9.20px;background:#08485e;"></div>
<div style="left:142.82px;top:194.20px;width:9.30px;height:9.20px;background:#82c8a2;"></div>
<div style="left:28.20px;top:204.60px;width:9.30px;height:2.40px;background:#1a6a30;"></div>
<div style="left:38.62px;top:204.60px;width:9.30px;height:2.40px;background:#30a040;"></div>
<div style="left:49.04px;top:204.60px;width:9.30px;height:2.40px;background:#c04030;"></div>
<div style="left:59.46px;top:204.60px;width:9.30px;height:2.40px;background:#f0f040;"></div>
<div style="left:69.88px;top:204.60px;width:9.30px;height:2.40px;background:#d02020;"></div>
<div style="left:80.30px;top:204.60px;width:9.30px;height:2.40px;background:#f0a0a0;"></div>
<div style="left:90.72px;top:204.60px;width:9.30px;height:2.40px;background:#9020c0;"></div>
<div style="left:101.14px;top:204.60px;width:9.30px;height:2.40px;background:#308080;"></div>
<div style="left:111.56px;top:204.60px;width:9.30px;height:2.40px;background:#ffffff;"></div>
<div style="left:121.98px;top:204.60px;width:9.30px;height:2.40px;background:#888888;"></div>
<div style="left:132.40px;top:204.60px;width:9.30px;height:2.40px;background:#d05050;"></div>
<div style="left:142.82px;top:204.60px;width:9.30px;height:2.40px;background:#d0d0b0;"></div>
<div style="left:154.20px;top:183.00px;width:5.60px;height:24.40px;background:#484848;"></div>
<div style="left:160.50px;top:182.00px;width:14.00px;height:25.50px;background:#212121;"></div>
<svg style="left:163.00px;top:184.00px;" width="9.00" height="6.00" viewBox="0 0 9 6"><path d="M1.6 5.2L4.5 .8L7.4 5.2z" fill="#c8c8c8"/></svg>
<div style="left:161.00px;top:192.00px;width:12.60px;height:4.00px;background:#8a8a8a;border-radius:1px;"></div>
<svg style="left:163.00px;top:199.50px;" width="9.00" height="6.00" viewBox="0 0 9 6"><path d="M1.6 .8L4.5 5.2L7.4 .8z" fill="#c8c8c8"/></svg>
<div style="left:27.00px;top:207.40px;width:149.50px;height:24.40px;background:#222;"></div>
<div style="left:31.00px;top:210.00px;width:17.20px;height:17.00px;background:#3a3a3a;border:1px solid #4a4a4a;border-radius:2.5px;"></div>
<svg style="left:31.00px;top:210.00px;" width="17.20" height="17.00" viewBox="0 0 18 18"><path d="M5.4 3.6h5l2.4 2.4v8.4H5.4z" fill="none" stroke="#f2f2f2" stroke-width="1.2"/><path d="M10.2 3.8v2.4h2.4" fill="none" stroke="#f2f2f2" stroke-width=".9"/></svg>
<div style="left:51.00px;top:210.00px;width:17.20px;height:17.00px;background:#222;border:1px solid #4a4a4a;border-radius:2.5px;"></div>
<svg style="left:51.00px;top:210.00px;" width="17.20" height="17.00" viewBox="0 0 18 18"><path d="M5.6 6.4h6.8v8H5.6z" fill="none" stroke="#f2f2f2" stroke-width="1.2"/><path d="M4.6 6h8.8M7.4 6V4.4h3.2V6" fill="none" stroke="#f2f2f2" stroke-width="1.2"/><path d="M7.8 8v5M10.2 8v5" stroke="#f2f2f2" stroke-width="1"/></svg>
<div style="left:72.00px;top:213.00px;width:1.00px;height:10.00px;background:#555;"></div>
<span class="t" style="left:76.00px;top:213.60px;font-size:9px;line-height:10.80px;color:#bbb;font-family:'Liberation Sans',sans-serif;transform:scaleX(1.0009);">---</span>
<div style="left:27.00px;top:235.00px;width:149.50px;height:16.40px;background:#353535;border-top:1.1px solid #4a6076;"></div>
<span class="t" style="left:75.25px;top:238.60px;font-size:9px;line-height:10.80px;color:#dcdcdc;font-family:'Liberation Sans',sans-serif;transform:scaleX(0.8764);">Cọ: Pen</span>
<svg style="left:154.00px;top:238.90px;" width="9.00" height="9.00" viewBox="0 0 9 9"><path d="M4.4 2.6H1.6V7.4H6.4V4.8" fill="none" stroke="#c4c4c4" stroke-width=".9"/><path d="M4.4 4.6L7.4 1.6M5.6 1.4h2v2" fill="none" stroke="#c4c4c4" stroke-width=".9"/></svg>
<svg style="left:166.00px;top:239.40px;" width="8.00" height="8.00" viewBox="0 0 8 8"><path d="M1.6 1.6L6.4 6.4M6.4 1.6L1.6 6.4" stroke="#dcdcdc" stroke-width="1.7"/></svg>
<div style="left:27.00px;top:251.40px;width:149.50px;height:90.00px;background:#272727;"></div>
<div style="left:28.00px;top:252.40px;width:132.20px;height:62.80px;background:#666;"></div>
<div style="left:28.00px;top:252.70px;width:132.20px;height:14.40px;background:#4a98d4;"></div>
<div style="left:30.00px;top:254.90px;width:10.40px;height:10.00px;background:#2a2a32;border:1px solid #1c3a5c;"></div>
<span class="t" style="left:44.20px;top:254.60px;font-size:9.5px;line-height:11.40px;color:#fff;font-family:'DejaVu Sans','Liberation Sans',sans-serif;transform:scaleX(0.8926);font-weight:bold;">10</span>
<span class="t" style="left:68.00px;top:254.60px;font-size:9.5px;line-height:11.40px;color:#fff;font-family:'DejaVu Sans','Liberation Sans',sans-serif;transform:scaleX(0.8677);font-weight:bold;">Pen</span>
<div style="left:28.00px;top:267.80px;width:132.20px;height:14.40px;background:#545454;"></div>
<div style="left:30.00px;top:270.00px;width:10.40px;height:10.00px;background:#2c2c2c;"></div>
<span class="t" style="left:44.20px;top:269.70px;font-size:9.5px;line-height:11.40px;color:#f0f0f0;font-family:'Liberation Sans',sans-serif;transform:scaleX(0.9747);">10</span>
<span class="t" style="left:68.00px;top:269.70px;font-size:9.5px;line-height:11.40px;color:#f0f0f0;font-family:'Liberation Sans',sans-serif;transform:scaleX(0.9761);">Pen (Sharp)</span>
<div style="left:28.00px;top:282.90px;width:132.20px;height:14.40px;background:#545454;"></div>
<div style="left:30.00px;top:285.10px;width:10.40px;height:10.00px;background:#f03434;"></div>
<span class="t" style="left:44.20px;top:284.80px;font-size:9.5px;line-height:11.40px;color:#f0f0f0;font-family:'Liberation Sans',sans-serif;transform:scaleX(0.9747);">15</span>
<span class="t" style="left:68.00px;top:284.80px;font-size:9.5px;line-height:11.40px;color:#f0f0f0;font-family:'Liberation Sans',sans-serif;transform:scaleX(0.9282);">G Pen</span>
<div style="left:28.00px;top:298.00px;width:132.20px;height:14.40px;background:#545454;"></div>
<div style="left:30.00px;top:300.20px;width:10.40px;height:10.00px;background:#f03434;"></div>
<span class="t" style="left:44.20px;top:299.90px;font-size:9.5px;line-height:11.40px;color:#f0f0f0;font-family:'Liberation Sans',sans-serif;transform:scaleX(0.9747);">15</span>
<span class="t" style="left:68.00px;top:299.90px;font-size:9.5px;line-height:11.40px;color:#f0f0f0;font-family:'Liberation Sans',sans-serif;transform:scaleX(0.9342);">Mapping Pen</span>
<div style="left:28.00px;top:313.00px;width:132.20px;height:2.00px;background:#555;"></div>
<svg style="left:147.00px;top:255.20px;" width="10.00" height="10.00" viewBox="0 0 10 10"><circle cx="5" cy="5" r="2.7" fill="none" stroke="#fff" stroke-width="1.8"/><path d="M5 5L9.60 5.00" stroke="#fff" stroke-width="1.5"/><path d="M5 5L8.25 8.25" stroke="#fff" stroke-width="1.5"/><path d="M5 5L5.00 9.60" stroke="#fff" stroke-width="1.5"/><path d="M5 5L1.75 8.25" stroke="#fff" stroke-width="1.5"/><path d="M5 5L0.40 5.00" stroke="#fff" stroke-width="1.5"/><path d="M5 5L1.75 1.75" stroke="#fff" stroke-width="1.5"/><path d="M5 5L5.00 0.40" stroke="#fff" stroke-width="1.5"/><path d="M5 5L8.25 1.75" stroke="#fff" stroke-width="1.5"/><circle cx="5" cy="5" r="1.3" fill="#4a98d4"/></svg>
<div style="left:161.00px;top:252.60px;width:14.00px;height:62.60px;background:#212121;"></div>
<svg style="left:163.50px;top:254.50px;" width="9.00" height="6.00" viewBox="0 0 9 6"><path d="M1.6 5.2L4.5 .8L7.4 5.2z" fill="#c8c8c8"/></svg>
<div style="left:161.60px;top:262.60px;width:12.60px;height:4.00px;background:#8a8a8a;border-radius:1px;"></div>
<svg style="left:163.50px;top:308.20px;" width="9.00" height="6.00" viewBox="0 0 9 6"><path d="M1.6 .8L4.5 5.2L7.4 .8z" fill="#c8c8c8"/></svg>
<div style="left:31.00px;top:318.40px;width:17.00px;height:17.00px;background:#454545;border:1px solid #393939;border-radius:2.5px;"></div>
<svg style="left:31.00px;top:318.40px;" width="17.00" height="17.00" viewBox="0 0 18 18"><path d="M5 10.6a2.7 2.7 0 0 1 .5-5.2 3.5 3.5 0 0 1 6.8-.2 2.7 2.7 0 0 1 .9 5.4z" fill="#f2f2f2"/><path d="M9 6.6L12.2 10.4H10.2V15H7.8V10.4H5.8z" fill="#f2f2f2" stroke="#3c3c3c" stroke-width=".9"/></svg>
<div style="left:51.20px;top:318.40px;width:17.00px;height:17.00px;background:#454545;border:1px solid #393939;border-radius:2.5px;"></div>
<svg style="left:51.20px;top:318.40px;" width="17.00" height="17.00" viewBox="0 0 18 18"><path d="M5.4 3.6h5l2.4 2.4v8.4H5.4z" fill="none" stroke="#f2f2f2" stroke-width="1.2"/><path d="M10.2 3.8v2.4h2.4" fill="none" stroke="#f2f2f2" stroke-width=".9"/></svg>
<div style="left:71.40px;top:318.40px;width:22.80px;height:17.00px;background:#454545;border:1px solid #393939;border-radius:2.5px;"></div>
<svg style="left:71.40px;top:318.40px;" width="22.80" height="17.00" viewBox="0 0 24 18"><path d="M4.4 3.6h5l2.4 2.4v8.4H4.4z" fill="none" stroke="#f2f2f2" stroke-width="1.2"/><rect x="6" y="8" width="2.2" height="2.2" fill="#f2f2f2"/><rect x="8.2" y="10.2" width="2.2" height="2.2" fill="#f2f2f2"/><path d="M15 8h5.2L17.6 11z" fill="#f2f2f2"/></svg>
<div style="left:96.80px;top:318.40px;width:17.00px;height:17.00px;background:#454545;border:1px solid #393939;border-radius:2.5px;"></div>
<svg style="left:96.80px;top:318.40px;" width="17.00" height="17.00" viewBox="0 0 18 18"><path d="M5.4 3.6h5l2.4 2.4v8.4H5.4z" fill="none" stroke="#f2f2f2" stroke-width="1.2"/><rect x="6.6" y="7.4" width="4.8" height="5.8" fill="none" stroke="#f2f2f2" stroke-width=".8"/><text x="9" y="12.4" font-size="5.6" font-weight="bold" font-family="Liberation Sans,sans-serif" fill="#f2f2f2" text-anchor="middle">S</text></svg>
<div style="left:117.00px;top:318.40px;width:17.00px;height:17.00px;background:#454545;border:1px solid #393939;border-radius:2.5px;"></div>
<svg style="left:117.00px;top:318.40px;" width="17.00" height="17.00" viewBox="0 0 18 18"><path d="M4 5.2h3.6l1 1.4h5.4v7.2H4z" fill="#f2f2f2"/></svg>
<div style="left:137.20px;top:318.40px;width:17.30px;height:17.00px;background:#454545;border:1px solid #393939;border-radius:2.5px;"></div>
<svg style="left:137.20px;top:318.40px;" width="17.30" height="17.00" viewBox="0 0 18 18"><rect x="7" y="4.6" width="6.4" height="6.4" fill="none" stroke="#f2f2f2" stroke-width="1.1"/><rect x="4.6" y="7" width="6.4" height="6.4" fill="#454545" stroke="#f2f2f2" stroke-width="1.1"/></svg>
<div style="left:158.00px;top:322.00px;width:1.00px;height:10.00px;background:#555;"></div>
<div style="left:166.00px;top:319.40px;width:6.00px;height:15.60px;background:#4c4c4c;border-radius:2px;"></div>
<div style="left:27.00px;top:344.60px;width:149.50px;height:15.20px;background:#353535;border-top:1.1px solid #4a6076;"></div>
<span class="t" style="left:66.25px;top:347.60px;font-size:9px;line-height:10.80px;color:#dcdcdc;font-family:'Liberation Sans',sans-serif;transform:scaleX(0.8464);">Xem trước cọ</span>
<svg style="left:154.00px;top:347.90px;" width="9.00" height="9.00" viewBox="0 0 9 9"><path d="M4.4 2.6H1.6V7.4H6.4V4.8" fill="none" stroke="#c4c4c4" stroke-width=".9"/><path d="M4.4 4.6L7.4 1.6M5.6 1.4h2v2" fill="none" stroke="#c4c4c4" stroke-width=".9"/></svg>
<svg style="left:166.00px;top:348.40px;" width="8.00" height="8.00" viewBox="0 0 8 8"><path d="M1.6 1.6L6.4 6.4M6.4 1.6L1.6 6.4" stroke="#dcdcdc" stroke-width="1.7"/></svg>
<div style="left:27.00px;top:359.80px;width:35.60px;height:36.40px;background:#fff;"></div>
<div style="left:62.60px;top:359.80px;width:114.00px;height:36.40px;background-color:#fff;background-image:linear-gradient(45deg,#e0e0e0 25%,transparent 25%,transparent 75%,#e0e0e0 75%),linear-gradient(45deg,#e0e0e0 25%,transparent 25%,transparent 75%,#e0e0e0 75%);background-size:6px 6px;background-position:0 0,3px 3px;"></div>
<div style="left:62.20px;top:359.80px;width:0.80px;height:36.40px;background:#8a9aaa;"></div>
<span class="t" style="left:36.00px;top:362.20px;font-size:8px;line-height:9.60px;color:#86aacc;font-family:'Liberation Sans',sans-serif;transform:scaleX(0.9170);clip-path:inset(0 0.5px 0 0);">0.73mm</span>
<svg style="left:62.60px;top:359.80px;" width="114.00" height="36.40" viewBox="0 0 114 36.4"><path d="M8 16.4C20 10 32 6.2 44 6.4 58 6.8 68 15 80 19.6 89 22.6 99 21.4 107.6 18.6 100 23.6 92 26.6 84 26.2 70 25.4 60 13.8 46 10.4 34 8 20 11.8 8 16.4z" fill="#000"/></svg>
<div style="left:27.00px;top:400.80px;width:149.50px;height:15.00px;background:#353535;border-top:1.1px solid #4a6076;"></div>
<span class="t" style="left:67.25px;top:403.70px;font-size:9px;line-height:10.80px;color:#dcdcdc;font-family:'Liberation Sans',sans-serif;transform:scaleX(0.8554);">Kiểm soát cọ</span>
<svg style="left:154.00px;top:404.00px;" width="9.00" height="9.00" viewBox="0 0 9 9"><path d="M4.4 2.6H1.6V7.4H6.4V4.8" fill="none" stroke="#c4c4c4" stroke-width=".9"/><path d="M4.4 4.6L7.4 1.6M5.6 1.4h2v2" fill="none" stroke="#c4c4c4" stroke-width=".9"/></svg>
<svg style="left:166.00px;top:404.50px;" width="8.00" height="8.00" viewBox="0 0 8 8"><path d="M1.6 1.6L6.4 6.4M6.4 1.6L1.6 6.4" stroke="#dcdcdc" stroke-width="1.7"/></svg>
<div style="left:27.00px;top:415.80px;width:149.50px;height:114.70px;background:#252525;"></div>
<div style="left:33.50px;top:426.00px;width:105.20px;height:10.60px;background:#fff;"></div>
<div style="left:33.50px;top:426.00px;width:19.20px;height:10.60px;background:linear-gradient(90deg,#6cb8f4,#8ccaf8);border:1px solid #5a9cd4;"></div>
<div style="left:143.60px;top:424.40px;width:25.40px;height:13.60px;background:#454545;border-radius:2px;"></div>
<span class="t" style="left:154.00px;top:425.70px;font-size:9.5px;line-height:11.40px;color:#dcdcdc;font-family:'Liberation Sans',sans-serif;transform:scaleX(1.0000);">10</span>
<div style="left:33.50px;top:444.20px;width:104.00px;height:11.20px;background:linear-gradient(90deg,#86c8f8,#5aa2de);border:1px solid #4682b8;"></div>
<span class="t" style="left:142.20px;top:444.30px;font-size:9.5px;line-height:11.40px;color:#dcdcdc;font-family:'Liberation Sans',sans-serif;transform:scaleX(1.0320);">100 %</span>
<div style="left:176.50px;top:56.50px;width:3.50px;height:474.00px;background:#1e1e1e;"></div>
<div style="left:179.00px;top:55.80px;width:573.50px;height:16.40px;background:#252525;"></div>
<div style="left:179.00px;top:55.80px;width:288.20px;height:16.80px;background:linear-gradient(#464646,#2b2b2b);border-radius:0 3px 0 0;"></div>
<span class="t" style="left:308.00px;top:58.40px;font-size:9px;line-height:10.80px;color:#d4d4d4;font-family:'Liberation Sans',sans-serif;transform:scaleX(0.9372);">Untitled</span>
<div style="left:180.00px;top:72.00px;width:572.50px;height:458.50px;background:#2a2a2a;"></div>
<div style="left:180.00px;top:72.80px;width:558.20px;height:442.40px;background:#fff;"></div>
<div style="left:738.80px;top:72.60px;width:14.60px;height:443.00px;background:linear-gradient(90deg,#1c1c1c 0,#2e2e2e 2px,#3a3a3a 50%,#2e2e2e 12.6px,#4a4a4a 13.6px,#222 14.6px);"></div>
<svg style="left:742.40px;top:74.60px;" width="8.00" height="6.00" viewBox="0 0 8 6"><path d="M1.2 5.2L4 1L6.8 5.2z" fill="#b4b4b4"/></svg>
<div style="left:740.00px;top:257.40px;width:12.40px;height:95.00px;background:#727272;border-radius:2.5px;"></div>
<svg style="left:742.40px;top:508.40px;" width="8.00" height="6.00" viewBox="0 0 8 6"><path d="M1.2 .8L4 5L6.8 .8z" fill="#b4b4b4"/></svg>
<div style="left:180.00px;top:515.60px;width:572.50px;height:14.90px;background:#2d2d2d;"></div>
<div style="left:189.00px;top:516.60px;width:549.00px;height:13.00px;background:#333;border-radius:2px;"></div>
<svg style="left:181.40px;top:519.00px;" width="6.00" height="8.00" viewBox="0 0 6 8"><path d="M5.2 .6L.8 4L5.2 7.400000000000001z" fill="#bdbdbd"/></svg>
<div style="left:406.60px;top:516.40px;width:134.40px;height:13.20px;background:#727272;border-radius:2.5px;"></div>
<svg style="left:744.60px;top:519.00px;" width="6.00" height="8.00" viewBox="0 0 6 8"><path d="M.8 .6L5.2 4L.8 7.400000000000001z" fill="#bdbdbd"/></svg>
<div style="left:752.50px;top:56.50px;width:4.00px;height:474.00px;background:#1e1e1e;"></div>
<div style="left:756.50px;top:56.50px;width:267.50px;height:474.00px;background:#232323;"></div>
<div style="left:756.50px;top:57.00px;width:267.50px;height:15.60px;background:#353535;border-top:1.1px solid #4a6076;"></div>
<span class="t" style="left:863.00px;top:60.20px;font-size:9px;line-height:10.80px;color:#dcdcdc;font-family:'Liberation Sans',sans-serif;transform:scaleX(0.8949);">Hoa tiêu</span>
<svg style="left:1001.50px;top:60.50px;" width="9.00" height="9.00" viewBox="0 0 9 9"><path d="M4.4 2.6H1.6V7.4H6.4V4.8" fill="none" stroke="#c4c4c4" stroke-width=".9"/><path d="M4.4 4.6L7.4 1.6M5.6 1.4h2v2" fill="none" stroke="#c4c4c4" stroke-width=".9"/></svg>
<svg style="left:1013.50px;top:61.00px;" width="8.00" height="8.00" viewBox="0 0 8 8"><path d="M1.6 1.6L6.4 6.4M6.4 1.6L1.6 6.4" stroke="#dcdcdc" stroke-width="1.7"/></svg>
<div style="left:756.50px;top:72.60px;width:267.50px;height:21.40px;background:#262626;"></div>
<div style="left:760.00px;top:74.60px;width:17.60px;height:17.60px;background:#454545;border:1px solid #393939;border-radius:2.5px;"></div>
<svg style="left:760.00px;top:74.60px;" width="17.60" height="17.60" viewBox="0 0 18 18"><circle cx="7.6" cy="7.6" r="3.5" fill="none" stroke="#f2f2f2" stroke-width="1.2"/><path d="M10.2 10.2L13.6 13.6" stroke="#f2f2f2" stroke-width="1.8"/><path d="M7 6.4L7.9 5.7v3.8" fill="none" stroke="#f2f2f2" stroke-width="1"/></svg>
<div style="left:785.00px;top:74.60px;width:17.60px;height:17.60px;background:#454545;border:1px solid #393939;border-radius:2.5px;"></div>
<svg style="left:785.00px;top:74.60px;" width="17.60" height="17.60" viewBox="0 0 18 18"><circle cx="7.6" cy="7.6" r="3.5" fill="none" stroke="#f2f2f2" stroke-width="1.2"/><path d="M10.2 10.2L13.6 13.6" stroke="#f2f2f2" stroke-width="1.8"/><path d="M5.8 7.6h3.6M7.6 5.8v3.6" stroke="#f2f2f2" stroke-width="1.1"/></svg>
<div style="left:805.60px;top:74.60px;width:17.60px;height:17.60px;background:#454545;border:1px solid #393939;border-radius:2.5px;"></div>
<svg style="left:805.60px;top:74.60px;" width="17.60" height="17.60" viewBox="0 0 18 18"><rect x="3.6" y="4.6" width="10.8" height="8.8" fill="#b4b4b4" stroke="#f2f2f2" stroke-width="1"/><path d="M4.8 7L7.4 9L4.8 11zM13.2 7L10.6 9L13.2 11z" fill="#3c3c3c"/><path d="M7 9h4" stroke="#3c3c3c" stroke-width="1"/></svg>
<div style="left:825.60px;top:74.60px;width:17.60px;height:17.60px;background:#454545;border:1px solid #393939;border-radius:2.5px;"></div>
<svg style="left:825.60px;top:74.60px;" width="17.60" height="17.60" viewBox="0 0 18 18"><circle cx="7.6" cy="7.6" r="3.5" fill="none" stroke="#f2f2f2" stroke-width="1.2"/><path d="M10.2 10.2L13.6 13.6" stroke="#f2f2f2" stroke-width="1.8"/><path d="M5.8 7.6h3.6" stroke="#f2f2f2" stroke-width="1.1"/></svg>
<div style="left:851.00px;top:74.60px;width:17.60px;height:17.60px;background:#454545;border:1px solid #393939;border-radius:2.5px;"></div>
<svg style="left:851.00px;top:74.60px;" width="17.60" height="17.60" viewBox="0 0 18 18"><circle cx="9" cy="9" r="5.2" fill="none" stroke="#f2f2f2" stroke-width="1.5"/><rect x="6.8" y="7" width="4.6" height="4" fill="#f2f2f2" transform="rotate(-20 9 9)"/><path d="M2.4 7.6L4 11L6.4 8z" fill="#f2f2f2"/></svg>
<div style="left:871.40px;top:74.60px;width:17.60px;height:17.60px;background:#242424;border:1px solid #484848;border-radius:2.5px;"></div>
<svg style="left:871.40px;top:74.60px;" width="17.60" height="17.60" viewBox="0 0 18 18"><rect x="5.8" y="6.2" width="6.4" height="5.6" fill="#f2f2f2"/><path d="M3.4 3.8L5.6 5.8M14.6 3.8L12.4 5.8M14.6 14.2L12.4 12.2M3.4 14.2L5.6 12.2" fill="none" stroke="#f2f2f2" stroke-width="1.3"/><path d="M3.2 5.4V3.6H5M13 3.6H14.8V5.4M14.8 12.6V14.4H13M5 14.4H3.2V12.6" fill="none" stroke="#f2f2f2" stroke-width="1"/></svg>
<div style="left:891.60px;top:74.60px;width:17.60px;height:17.60px;background:#454545;border:1px solid #393939;border-radius:2.5px;"></div>
<svg style="left:891.60px;top:74.60px;" width="17.60" height="17.60" viewBox="0 0 18 18"><circle cx="9" cy="9" r="5.2" fill="none" stroke="#f2f2f2" stroke-width="1.5"/><rect x="6.8" y="7" width="4.6" height="4" fill="#f2f2f2" transform="rotate(20 9 9)"/><path d="M15.6 7.6L14 11L11.6 8z" fill="#f2f2f2"/></svg>
<div style="left:917.20px;top:74.60px;width:17.60px;height:17.60px;background:#454545;border:1px solid #393939;border-radius:2.5px;"></div>
<svg style="left:917.20px;top:74.60px;" width="17.60" height="17.60" viewBox="0 0 18 18"><path d="M4 8h3.4v6H4z" fill="#f2f2f2"/><path d="M10.4 8h3.4v6h-3.4z" fill="none" stroke="#f2f2f2" stroke-width="1"/><path d="M5.6 6.4C5.6 3 12 3 12.2 6.4M11 5.4L12.2 7L13.6 5.4" fill="none" stroke="#f2f2f2" stroke-width="1"/></svg>
<div style="left:781.00px;top:78.00px;width:1.00px;height:10.00px;background:#4c4c4c;"></div>
<div style="left:847.00px;top:78.00px;width:1.00px;height:10.00px;background:#4c4c4c;"></div>
<div style="left:913.00px;top:78.00px;width:1.00px;height:10.00px;background:#4c4c4c;"></div>
<div style="left:756.50px;top:94.00px;width:267.50px;height:41.00px;background:#444;"></div>
<div style="left:871.00px;top:94.40px;width:39.20px;height:40.40px;background:#fff;"></div>
<div style="left:874.60px;top:103.40px;width:34.80px;height:26.60px;border:1.5px solid #c4101c;background:#fff;"></div>
<div style="left:756.50px;top:137.60px;width:267.50px;height:15.80px;background:#353535;border-top:1.1px solid #4a6076;"></div>
<span class="t" style="left:870.75px;top:140.90px;font-size:9px;line-height:10.80px;color:#dcdcdc;font-family:'Liberation Sans',sans-serif;transform:scaleX(0.9112);">Lớp</span>
<svg style="left:1001.50px;top:141.20px;" width="9.00" height="9.00" viewBox="0 0 9 9"><path d="M4.4 2.6H1.6V7.4H6.4V4.8" fill="none" stroke="#c4c4c4" stroke-width=".9"/><path d="M4.4 4.6L7.4 1.6M5.6 1.4h2v2" fill="none" stroke="#c4c4c4" stroke-width=".9"/></svg>
<svg style="left:1013.50px;top:141.70px;" width="8.00" height="8.00" viewBox="0 0 8 8"><path d="M1.6 1.6L6.4 6.4M6.4 1.6L1.6 6.4" stroke="#dcdcdc" stroke-width="1.7"/></svg>
<div style="left:756.50px;top:153.40px;width:267.50px;height:176.00px;background:#262626;"></div>
<span class="t" style="left:761.00px;top:159.80px;font-size:9px;line-height:10.80px;color:#dcdcdc;font-family:'Liberation Sans',sans-serif;transform:scaleX(0.9270);">Độ trong</span>
<div style="left:828.60px;top:158.60px;width:155.60px;height:11.20px;background:linear-gradient(90deg,#86c8f8,#5aa2de);border:1px solid #4682b8;"></div>
<span class="t" style="left:989.40px;top:159.80px;font-size:9px;line-height:10.80px;color:#dcdcdc;font-family:'Liberation Sans',sans-serif;transform:scaleX(0.9170);">100 %</span>
<span class="t" style="left:761.00px;top:178.40px;font-size:9px;line-height:10.80px;color:#dcdcdc;font-family:'Liberation Sans',sans-serif;transform:scaleX(0.8994);">Pha trộn</span>
<div style="left:830.00px;top:175.40px;width:190.00px;height:15.60px;background:#474747;border-radius:2px;"></div>
<span class="t" style="left:831.60px;top:178.40px;font-size:9px;line-height:10.80px;color:#dcdcdc;font-family:'Liberation Sans',sans-serif;transform:scaleX(0.8641);">Bình thường</span>
<svg style="left:1011.00px;top:181.40px;" width="7.00" height="5.00" viewBox="0 0 7 5"><path d="M1.2 .8h4.6L3.5 3.8z" fill="#bdbdbd"/></svg>
<div style="left:763.60px;top:198.60px;width:8.60px;height:8.60px;border:1px solid #e8e8e8;background:transparent;"></div>
<span class="t" style="left:776.00px;top:197.80px;font-size:9px;line-height:10.80px;color:#dcdcdc;font-family:'Liberation Sans',sans-serif;transform:scaleX(0.8869);">Bảo vệ alpha</span>
<div style="left:852.70px;top:198.60px;width:8.60px;height:8.60px;border:1px solid #4a4a4a;background:transparent;"></div>
<span class="t" style="left:864.60px;top:197.80px;font-size:9px;line-height:10.80px;color:#646464;font-family:'Liberation Sans',sans-serif;transform:scaleX(0.8897);">Xén bớt</span>
<div style="left:939.00px;top:198.60px;width:8.60px;height:8.60px;border:1px solid #e8e8e8;background:transparent;"></div>
<span class="t" style="left:951.40px;top:197.80px;font-size:9px;line-height:10.80px;color:#dcdcdc;font-family:'Liberation Sans',sans-serif;transform:scaleX(0.9324);">Khóa</span>
<div style="left:759.00px;top:213.00px;width:248.60px;height:89.80px;background:#464544;"></div>
<div style="left:759.00px;top:213.20px;width:14.00px;height:29.00px;background:#686868;"></div>
<div style="left:763.00px;top:225.00px;width:5.80px;height:5.80px;background:#ececec;border-radius:3px;"></div>
<div style="left:773.00px;top:213.20px;width:234.60px;height:29.00px;background:#4a98d4;border-left:1.5px solid #3f86c0;"></div>
<div style="left:784.40px;top:215.20px;width:26.20px;height:26.00px;background-color:#fff;background-image:linear-gradient(45deg,#e0e0e0 25%,transparent 25%,transparent 75%,#e0e0e0 75%),linear-gradient(45deg,#e0e0e0 25%,transparent 25%,transparent 75%,#e0e0e0 75%);background-size:6px 6px;background-position:0 0,3px 3px;"></div>
<span class="t" style="left:822.60px;top:222.70px;font-size:9.5px;line-height:11.40px;color:#fff;font-family:'DejaVu Sans','Liberation Sans',sans-serif;transform:scaleX(0.9003);font-weight:bold;">Lớp1</span>
<svg style="left:991.60px;top:222.00px;" width="12.40" height="12.40" viewBox="0 0 10 10"><circle cx="5" cy="5" r="2.7" fill="none" stroke="#fff" stroke-width="1.8"/><path d="M5 5L9.60 5.00" stroke="#fff" stroke-width="1.5"/><path d="M5 5L8.25 8.25" stroke="#fff" stroke-width="1.5"/><path d="M5 5L5.00 9.60" stroke="#fff" stroke-width="1.5"/><path d="M5 5L1.75 8.25" stroke="#fff" stroke-width="1.5"/><path d="M5 5L0.40 5.00" stroke="#fff" stroke-width="1.5"/><path d="M5 5L1.75 1.75" stroke="#fff" stroke-width="1.5"/><path d="M5 5L5.00 0.40" stroke="#fff" stroke-width="1.5"/><path d="M5 5L8.25 1.75" stroke="#fff" stroke-width="1.5"/><circle cx="5" cy="5" r="1.3" fill="#4a98d4"/></svg>
<div style="left:1008.60px;top:213.60px;width:14.40px;height:89.20px;background:#212121;"></div>
<svg style="left:1011.40px;top:215.40px;" width="9.00" height="6.00" viewBox="0 0 9 6"><path d="M1.6 5.2L4.5 .8L7.4 5.2z" fill="#c8c8c8"/></svg>
<div style="left:1009.60px;top:222.60px;width:12.60px;height:71.60px;background:#6e6e6e;border-radius:3px;"></div>
<svg style="left:1011.40px;top:295.60px;" width="9.00" height="6.00" viewBox="0 0 9 6"><path d="M1.6 .8L4.5 5.2L7.4 .8z" fill="#c8c8c8"/></svg>
<div style="left:761.50px;top:306.20px;width:17.40px;height:17.00px;background:#454545;border:1px solid #393939;border-radius:2.5px;"></div>
<svg style="left:761.50px;top:306.20px;" width="17.40" height="17.00" viewBox="0 0 18 18"><path d="M5.4 3.6h5l2.4 2.4v8.4H5.4z" fill="none" stroke="#f2f2f2" stroke-width="1.2"/><path d="M10.2 3.8v2.4h2.4" fill="none" stroke="#f2f2f2" stroke-width=".9"/></svg>
<div style="left:782.00px;top:306.20px;width:17.40px;height:17.00px;background:#454545;border:1px solid #393939;border-radius:2.5px;"></div>
<svg style="left:782.00px;top:306.20px;" width="17.40" height="17.00" viewBox="0 0 18 18"><path d="M5.4 3.6h5l2.4 2.4v8.4H5.4z" fill="none" stroke="#f2f2f2" stroke-width="1.2"/><path d="M10.2 3.8v2.4h2.4" fill="none" stroke="#f2f2f2" stroke-width=".9"/><text x="9" y="13" font-size="6.5" font-family="Liberation Sans,sans-serif" font-weight="bold" fill="#f2f2f2" text-anchor="middle">8</text></svg>
<div style="left:802.20px;top:306.20px;width:17.40px;height:17.00px;background:#454545;border:1px solid #393939;border-radius:2.5px;"></div>
<svg style="left:802.20px;top:306.20px;" width="17.40" height="17.00" viewBox="0 0 18 18"><path d="M5.4 3.6h5l2.4 2.4v8.4H5.4z" fill="none" stroke="#f2f2f2" stroke-width="1.2"/><path d="M10.2 3.8v2.4h2.4" fill="none" stroke="#f2f2f2" stroke-width=".9"/><text x="9" y="13" font-size="6.5" font-family="Liberation Sans,sans-serif" font-weight="bold" fill="#f2f2f2" text-anchor="middle">1</text></svg>
<div style="left:822.60px;top:306.20px;width:22.40px;height:17.00px;background:#454545;border:1px solid #393939;border-radius:2.5px;"></div>
<svg style="left:822.60px;top:306.20px;" width="22.40" height="17.00" viewBox="0 0 24 18"><path d="M4.4 3.6h5l2.4 2.4v6.4M8.4 14.4H4.4V3.6" fill="none" stroke="#f2f2f2" stroke-width="1.2"/><path d="M9.2 3.8v2.4h2.4" fill="none" stroke="#f2f2f2" stroke-width=".9"/><path d="M8.6 12.6h5M11.1 10.1v5" stroke="#f2f2f2" stroke-width="1.4"/><path d="M15.4 8h5.2L18 11z" fill="#f2f2f2"/></svg>
<div style="left:847.40px;top:306.20px;width:17.60px;height:17.00px;background:#454545;border:1px solid #393939;border-radius:2.5px;"></div>
<svg style="left:847.40px;top:306.20px;" width="17.60" height="17.00" viewBox="0 0 18 18"><path d="M3.8 5.2h3.8l1 1.4h5.6v7.4H3.8z" fill="#f2f2f2"/><path d="M3.8 8h10.4" stroke="#999" stroke-width=".6"/></svg>
<div style="left:873.00px;top:306.20px;width:17.40px;height:17.00px;background:#454545;border:1px solid #393939;border-radius:2.5px;"></div>
<svg style="left:873.00px;top:306.20px;" width="17.40" height="17.00" viewBox="0 0 18 18"><rect x="7" y="4.6" width="6.4" height="6.4" fill="none" stroke="#f2f2f2" stroke-width="1.1"/><rect x="4.6" y="7" width="6.4" height="6.4" fill="#454545" stroke="#f2f2f2" stroke-width="1.1"/></svg>
<div style="left:893.20px;top:306.20px;width:17.60px;height:17.00px;background:#222;border:1px solid #4a4a4a;border-radius:2.5px;"></div>
<svg style="left:893.20px;top:306.20px;" width="17.60" height="17.00" viewBox="0 0 18 18"><rect x="4" y="4" width="4" height="3.4" fill="none" stroke="#f2f2f2" stroke-width="1"/><rect x="4" y="10.6" width="4" height="3.4" fill="none" stroke="#f2f2f2" stroke-width="1"/><rect x="11" y="7" width="4" height="4" fill="#f2f2f2"/><path d="M8 5.6h1.6v6.8H8M9.6 9h1.4" fill="none" stroke="#f2f2f2" stroke-width="1"/></svg>
<div style="left:919.00px;top:306.20px;width:17.40px;height:17.00px;background:#222;border:1px solid #4a4a4a;border-radius:2.5px;"></div>
<svg style="left:919.00px;top:306.20px;" width="17.40" height="17.00" viewBox="0 0 18 18"><path d="M5.6 6.4h6.8v8H5.6z" fill="none" stroke="#f2f2f2" stroke-width="1.2"/><path d="M4.6 6h8.8M7.4 6V4.4h3.2V6" fill="none" stroke="#f2f2f2" stroke-width="1.2"/><path d="M7.8 8v5M10.2 8v5" stroke="#f2f2f2" stroke-width="1"/></svg>
<div style="left:869.00px;top:309.60px;width:1.00px;height:10.00px;background:#555;"></div>
<div style="left:915.00px;top:309.60px;width:1.00px;height:10.00px;background:#555;"></div>
<div style="left:756.50px;top:332.00px;width:267.50px;height:16.00px;background:#353535;border-top:1.1px solid #4a6076;"></div>
<span class="t" style="left:859.50px;top:335.40px;font-size:9px;line-height:10.80px;color:#dcdcdc;font-family:'Liberation Sans',sans-serif;transform:scaleX(0.8910);">Reference</span>
<svg style="left:1001.50px;top:335.70px;" width="9.00" height="9.00" viewBox="0 0 9 9"><path d="M4.4 2.6H1.6V7.4H6.4V4.8" fill="none" stroke="#c4c4c4" stroke-width=".9"/><path d="M4.4 4.6L7.4 1.6M5.6 1.4h2v2" fill="none" stroke="#c4c4c4" stroke-width=".9"/></svg>
<svg style="left:1013.50px;top:336.20px;" width="8.00" height="8.00" viewBox="0 0 8 8"><path d="M1.6 1.6L6.4 6.4M6.4 1.6L1.6 6.4" stroke="#dcdcdc" stroke-width="1.7"/></svg>
<div style="left:756.50px;top:348.00px;width:267.50px;height:22.00px;background:#262626;"></div>
<div style="left:759.80px;top:350.40px;width:17.40px;height:17.20px;background:#454545;border:1px solid #393939;border-radius:2.5px;"></div>
<svg style="left:759.80px;top:350.40px;" width="17.40" height="17.20" viewBox="0 0 18 18"><path d="M5 10.6a2.7 2.7 0 0 1 .5-5.2 3.5 3.5 0 0 1 6.8-.2 2.7 2.7 0 0 1 .9 5.4z" fill="#f2f2f2"/><path d="M9 6.6L12.2 10.4H10.2V15H7.8V10.4H5.8z" fill="#f2f2f2" stroke="#3c3c3c" stroke-width=".9"/></svg>
<div style="left:780.20px;top:350.40px;width:17.40px;height:17.20px;background:#454545;border:1px solid #393939;border-radius:2.5px;"></div>
<svg style="left:780.20px;top:350.40px;" width="17.40" height="17.20" viewBox="0 0 18 18"><path d="M3.6 5h3.6l1 1.4h5v2H6L3.6 13.4z" fill="#f2f2f2"/><path d="M6.4 9.2h8.8L13 14H4z" fill="#d0d0d0"/></svg>
<div style="left:800.50px;top:350.40px;width:17.40px;height:17.20px;background:#242424;border:1px solid #484848;border-radius:2.5px;"></div>
<svg style="left:800.50px;top:350.40px;" width="17.40" height="17.20" viewBox="0 0 18 18"><path d="M5.8 5.8L12.2 12.2M12.2 5.8L5.8 12.2" stroke="#f2f2f2" stroke-width="1.7"/></svg>
<div style="left:826.00px;top:350.40px;width:17.40px;height:17.20px;background:#242424;border:1px solid #484848;border-radius:2.5px;"></div>
<svg style="left:826.00px;top:350.40px;" width="17.40" height="17.20" viewBox="0 0 18 18"><circle cx="7.6" cy="7.6" r="3.5" fill="none" stroke="#f2f2f2" stroke-width="1.2"/><path d="M10.2 10.2L13.6 13.6" stroke="#f2f2f2" stroke-width="1.8"/><path d="M5.8 7.6h3.6M7.6 5.8v3.6" stroke="#f2f2f2" stroke-width="1.1"/></svg>
<div style="left:845.80px;top:350.40px;width:17.40px;height:17.20px;background:#242424;border:1px solid #484848;border-radius:2.5px;"></div>
<svg style="left:845.80px;top:350.40px;" width="17.40" height="17.20" viewBox="0 0 18 18"><rect x="4" y="4.6" width="10" height="8.8" fill="none" stroke="#f2f2f2" stroke-width="1.1"/><path d="M5.6 6.2L8 6.2L5.6 8.6zM12.4 6.2L10 6.2L12.4 8.6zM5.6 11.8L8 11.8L5.6 9.4zM12.4 11.8L10 11.8L12.4 9.4z" fill="#f2f2f2"/></svg>
<div style="left:865.60px;top:350.40px;width:17.40px;height:17.20px;background:#242424;border:1px solid #484848;border-radius:2.5px;"></div>
<svg style="left:865.60px;top:350.40px;" width="17.40" height="17.20" viewBox="0 0 18 18"><circle cx="7.6" cy="7.6" r="3.5" fill="none" stroke="#f2f2f2" stroke-width="1.2"/><path d="M10.2 10.2L13.6 13.6" stroke="#f2f2f2" stroke-width="1.8"/><path d="M5.8 7.6h3.6" stroke="#f2f2f2" stroke-width="1.1"/></svg>
<div style="left:892.00px;top:350.40px;width:17.40px;height:17.20px;background:#242424;border:1px solid #484848;border-radius:2.5px;"></div>
<svg style="left:892.00px;top:350.40px;" width="17.40" height="17.20" viewBox="0 0 18 18"><path d="M4.4 13.8L5 11.4L10 6.4L11.8 8.2L6.8 13.2z" fill="none" stroke="#f2f2f2" stroke-width="1.1"/><path d="M9.2 5.4L12.8 9" stroke="#f2f2f2" stroke-width="1.5"/><path d="M11 6.6L13 3.8C13.8 3 15.2 4.4 14.4 5.2z" fill="#f2f2f2"/></svg>
<div style="left:912.00px;top:350.40px;width:17.40px;height:17.20px;background:#4e9bd8;border:1px solid #62aae2;border-radius:2.5px;"></div>
<svg style="left:912.00px;top:350.40px;" width="17.40" height="17.20" viewBox="0 0 18 18"><g transform="translate(9 9) scale(.88) translate(-10 -10.4)"><path d="M7 17C6 15.4 4.6 14 3.4 12.2" fill="none" stroke="#e8f4fe" stroke-width="1.7" stroke-linecap="round"/><path d="M7.2 12L5.8 6.6M9.2 11L8.8 4.2M11.2 11L11.8 4.4M13.4 11.6L14.8 6.6" fill="none" stroke="#e8f4fe" stroke-width="1.6" stroke-linecap="round"/><path d="M5.8 11.4L14.6 10.8V13.4C14.6 15.2 13.8 16.2 13.4 17.4H7C6.6 16 5.8 14.6 5.8 13z" fill="#e8f4fe"/><path d="M3.4 12.2C3 11 4.4 10.6 5 11.6L6.4 13.6" fill="#e8f4fe" stroke="#e8f4fe" stroke-width="1"/></g></svg>
<div style="left:937.70px;top:350.40px;width:17.40px;height:17.20px;background:#242424;border:1px solid #484848;border-radius:2.5px;"></div>
<svg style="left:937.70px;top:350.40px;" width="17.40" height="17.20" viewBox="0 0 18 18"><circle cx="9" cy="9" r="5.2" fill="none" stroke="#f2f2f2" stroke-width="1.5"/><rect x="6.8" y="7" width="4.6" height="4" fill="#f2f2f2" transform="rotate(-20 9 9)"/><path d="M2.4 7.6L4 11L6.4 8z" fill="#f2f2f2"/></svg>
<div style="left:957.60px;top:350.40px;width:17.40px;height:17.20px;background:#242424;border:1px solid #484848;border-radius:2.5px;"></div>
<svg style="left:957.60px;top:350.40px;" width="17.40" height="17.20" viewBox="0 0 18 18"><rect x="5.8" y="6.2" width="6.4" height="5.6" fill="#f2f2f2"/><path d="M3.4 3.8L5.6 5.8M14.6 3.8L12.4 5.8M14.6 14.2L12.4 12.2M3.4 14.2L5.6 12.2" fill="none" stroke="#f2f2f2" stroke-width="1.3"/><path d="M3.2 5.4V3.6H5M13 3.6H14.8V5.4M14.8 12.6V14.4H13M5 14.4H3.2V12.6" fill="none" stroke="#f2f2f2" stroke-width="1"/></svg>
<div style="left:977.70px;top:350.40px;width:17.40px;height:17.20px;background:#242424;border:1px solid #484848;border-radius:2.5px;"></div>
<svg style="left:977.70px;top:350.40px;" width="17.40" height="17.20" viewBox="0 0 18 18"><circle cx="9" cy="9" r="5.2" fill="none" stroke="#f2f2f2" stroke-width="1.5"/><rect x="6.8" y="7" width="4.6" height="4" fill="#f2f2f2" transform="rotate(20 9 9)"/><path d="M15.6 7.6L14 11L11.6 8z" fill="#f2f2f2"/></svg>
<div style="left:1003.50px;top:350.40px;width:17.40px;height:17.20px;background:#242424;border:1px solid #484848;border-radius:2.5px;"></div>
<svg style="left:1003.50px;top:350.40px;" width="17.40" height="17.20" viewBox="0 0 18 18"><path d="M4 8h3.4v6H4z" fill="#f2f2f2"/><path d="M10.4 8h3.4v6h-3.4z" fill="none" stroke="#f2f2f2" stroke-width="1"/><path d="M5.6 6.4C5.6 3 12 3 12.2 6.4M11 5.4L12.2 7L13.6 5.4" fill="none" stroke="#f2f2f2" stroke-width="1"/></svg>
<div style="left:822.00px;top:354.00px;width:1.00px;height:10.00px;background:#555;"></div>
<div style="left:887.40px;top:354.00px;width:1.00px;height:10.00px;background:#555;"></div>
<div style="left:933.40px;top:354.00px;width:1.00px;height:10.00px;background:#555;"></div>
<div style="left:999.20px;top:354.00px;width:1.00px;height:10.00px;background:#555;"></div>
<div style="left:756.50px;top:370.00px;width:267.50px;height:4.60px;background-color:#fff;background-image:linear-gradient(45deg,#ededed 25%,transparent 25%,transparent 75%,#ededed 75%),linear-gradient(45deg,#ededed 25%,transparent 25%,transparent 75%,#ededed 75%);background-size:4px 4px;background-position:0 0,2px 2px;"></div>
<div style="left:756.50px;top:379.30px;width:267.50px;height:15.20px;background:#353535;border-top:1.1px solid #4a6076;"></div>
<span class="t" style="left:859.50px;top:382.30px;font-size:9px;line-height:10.80px;color:#dcdcdc;font-family:'Liberation Sans',sans-serif;transform:scaleX(0.8502);">Brush Size</span>
<svg style="left:1001.50px;top:382.60px;" width="9.00" height="9.00" viewBox="0 0 9 9"><path d="M4.4 2.6H1.6V7.4H6.4V4.8" fill="none" stroke="#c4c4c4" stroke-width=".9"/><path d="M4.4 4.6L7.4 1.6M5.6 1.4h2v2" fill="none" stroke="#c4c4c4" stroke-width=".9"/></svg>
<svg style="left:1013.50px;top:383.10px;" width="8.00" height="8.00" viewBox="0 0 8 8"><path d="M1.6 1.6L6.4 6.4M6.4 1.6L1.6 6.4" stroke="#dcdcdc" stroke-width="1.7"/></svg>
<div style="left:756.50px;top:394.40px;width:267.50px;height:136.10px;background:#444;"></div>
<div style="left:757.00px;top:394.90px;width:29.20px;height:36.70px;background:#555;"></div>
<div style="left:771.35px;top:409.65px;width:0.50px;height:0.50px;background:#999;border-radius:50%;"></div>
<span class="t" style="left:769.56px;top:422.70px;font-size:7.5px;line-height:9.00px;color:#eee;font-family:'Liberation Sans',sans-serif;transform:scaleX(0.9800);">1</span>
<div style="left:787.00px;top:394.90px;width:29.20px;height:36.70px;background:#555;"></div>
<div style="left:801.05px;top:409.35px;width:1.10px;height:1.10px;background:#999;border-radius:50%;"></div>
<span class="t" style="left:796.49px;top:422.70px;font-size:7.5px;line-height:9.00px;color:#eee;font-family:'Liberation Sans',sans-serif;transform:scaleX(0.9800);">1.5</span>
<div style="left:817.00px;top:394.90px;width:29.20px;height:36.70px;background:#555;"></div>
<div style="left:830.80px;top:409.10px;width:1.60px;height:1.60px;background:#ddd;border-radius:50%;"></div>
<span class="t" style="left:829.56px;top:422.70px;font-size:7.5px;line-height:9.00px;color:#eee;font-family:'Liberation Sans',sans-serif;transform:scaleX(0.9800);">2</span>
<div style="left:847.00px;top:394.90px;width:29.20px;height:36.70px;background:#555;"></div>
<div style="left:860.50px;top:408.80px;width:2.20px;height:2.20px;background:#ddd;border-radius:50%;"></div>
<span class="t" style="left:859.56px;top:422.70px;font-size:7.5px;line-height:9.00px;color:#eee;font-family:'Liberation Sans',sans-serif;transform:scaleX(0.9800);">3</span>
<div style="left:877.00px;top:394.90px;width:29.20px;height:36.70px;background:#555;"></div>
<div style="left:890.10px;top:408.40px;width:3.00px;height:3.00px;background:#f2f2f2;border-radius:50%;"></div>
<span class="t" style="left:889.56px;top:422.70px;font-size:7.5px;line-height:9.00px;color:#eee;font-family:'Liberation Sans',sans-serif;transform:scaleX(0.9800);">4</span>
<div style="left:907.00px;top:394.90px;width:29.20px;height:36.70px;background:#555;"></div>
<div style="left:919.80px;top:408.10px;width:3.60px;height:3.60px;background:#f2f2f2;border-radius:50%;"></div>
<span class="t" style="left:919.56px;top:422.70px;font-size:7.5px;line-height:9.00px;color:#eee;font-family:'Liberation Sans',sans-serif;transform:scaleX(0.9800);">5</span>
<div style="left:937.00px;top:394.90px;width:29.20px;height:36.70px;background:#555;"></div>
<div style="left:949.00px;top:407.30px;width:5.20px;height:5.20px;background:#f2f2f2;border-radius:50%;"></div>
<span class="t" style="left:949.56px;top:422.70px;font-size:7.5px;line-height:9.00px;color:#eee;font-family:'Liberation Sans',sans-serif;transform:scaleX(0.9800);">7</span>
<div style="left:967.00px;top:394.90px;width:29.20px;height:36.70px;background:#555;"></div>
<div style="left:977.60px;top:405.90px;width:8.00px;height:8.00px;background:#f2f2f2;border-radius:50%;"></div>
<span class="t" style="left:977.51px;top:422.70px;font-size:7.5px;line-height:9.00px;color:#eee;font-family:'Liberation Sans',sans-serif;transform:scaleX(0.9800);">10</span>
<div style="left:757.00px;top:432.60px;width:29.20px;height:36.70px;background:#555;"></div>
<div style="left:766.70px;top:442.40px;width:9.80px;height:9.80px;background:#f2f2f2;border-radius:50%;"></div>
<span class="t" style="left:767.51px;top:460.10px;font-size:7.5px;line-height:9.00px;color:#eee;font-family:'Liberation Sans',sans-serif;transform:scaleX(0.9800);">12</span>
<div style="left:787.00px;top:432.60px;width:29.20px;height:36.70px;background:#555;"></div>
<div style="left:795.80px;top:441.50px;width:11.60px;height:11.60px;background:#f2f2f2;border-radius:50%;"></div>
<span class="t" style="left:797.51px;top:460.10px;font-size:7.5px;line-height:9.00px;color:#eee;font-family:'Liberation Sans',sans-serif;transform:scaleX(0.9800);">15</span>
<div style="left:817.00px;top:432.60px;width:29.20px;height:36.70px;background:#555;"></div>
<div style="left:823.90px;top:439.60px;width:15.40px;height:15.40px;background:#f2f2f2;border-radius:50%;"></div>
<span class="t" style="left:827.51px;top:460.10px;font-size:7.5px;line-height:9.00px;color:#eee;font-family:'Liberation Sans',sans-serif;transform:scaleX(0.9800);">20</span>
<div style="left:847.00px;top:432.60px;width:29.20px;height:36.70px;background:#555;"></div>
<div style="left:852.40px;top:438.10px;width:18.40px;height:18.40px;background:#f2f2f2;border-radius:50%;"></div>
<span class="t" style="left:857.51px;top:460.10px;font-size:7.5px;line-height:9.00px;color:#eee;font-family:'Liberation Sans',sans-serif;transform:scaleX(0.9800);">25</span>
<div style="left:877.00px;top:432.60px;width:29.20px;height:36.70px;background:#555;"></div>
<div style="left:882.40px;top:438.10px;width:18.40px;height:18.40px;background:#f2f2f2;border-radius:50%;"></div>
<span class="t" style="left:887.51px;top:460.10px;font-size:7.5px;line-height:9.00px;color:#eee;font-family:'Liberation Sans',sans-serif;transform:scaleX(0.9800);">30</span>
<div style="left:907.00px;top:432.60px;width:29.20px;height:36.70px;background:#555;"></div>
<div style="left:912.40px;top:438.10px;width:18.40px;height:18.40px;background:#f2f2f2;border-radius:50%;"></div>
<span class="t" style="left:917.51px;top:460.10px;font-size:7.5px;line-height:9.00px;color:#eee;font-family:'Liberation Sans',sans-serif;transform:scaleX(0.9800);">40</span>
<div style="left:937.00px;top:432.60px;width:29.20px;height:36.70px;background:#555;"></div>
<div style="left:942.40px;top:438.10px;width:18.40px;height:18.40px;background:#f2f2f2;border-radius:50%;"></div>
<span class="t" style="left:947.51px;top:460.10px;font-size:7.5px;line-height:9.00px;color:#eee;font-family:'Liberation Sans',sans-serif;transform:scaleX(0.9800);">50</span>
<div style="left:967.00px;top:432.60px;width:29.20px;height:36.70px;background:#555;"></div>
<div style="left:972.40px;top:438.10px;width:18.40px;height:18.40px;background:#f2f2f2;border-radius:50%;"></div>
<span class="t" style="left:977.51px;top:460.10px;font-size:7.5px;line-height:9.00px;color:#eee;font-family:'Liberation Sans',sans-serif;transform:scaleX(0.9800);">70</span>
<div style="left:757.00px;top:470.30px;width:29.20px;height:36.70px;background:#555;"></div>
<div style="left:762.40px;top:476.00px;width:18.40px;height:18.40px;background:#f2f2f2;border-radius:50%;"></div>
<span class="t" style="left:765.47px;top:497.60px;font-size:7.5px;line-height:9.00px;color:#eee;font-family:'Liberation Sans',sans-serif;transform:scaleX(0.9800);">100</span>
<div style="left:787.00px;top:470.30px;width:29.20px;height:36.70px;background:#555;"></div>
<div style="left:792.40px;top:476.00px;width:18.40px;height:18.40px;background:#f2f2f2;border-radius:50%;"></div>
<span class="t" style="left:795.47px;top:497.60px;font-size:7.5px;line-height:9.00px;color:#eee;font-family:'Liberation Sans',sans-serif;transform:scaleX(0.9800);">150</span>
<div style="left:817.00px;top:470.30px;width:29.20px;height:36.70px;background:#555;"></div>
<div style="left:822.40px;top:476.00px;width:18.40px;height:18.40px;background:#f2f2f2;border-radius:50%;"></div>
<span class="t" style="left:825.47px;top:497.60px;font-size:7.5px;line-height:9.00px;color:#eee;font-family:'Liberation Sans',sans-serif;transform:scaleX(0.9800);">200</span>
<div style="left:847.00px;top:470.30px;width:29.20px;height:36.70px;background:#555;"></div>
<div style="left:852.40px;top:476.00px;width:18.40px;height:18.40px;background:#f2f2f2;border-radius:50%;"></div>
<span class="t" style="left:855.47px;top:497.60px;font-size:7.5px;line-height:9.00px;color:#eee;font-family:'Liberation Sans',sans-serif;transform:scaleX(0.9800);">300</span>
<div style="left:877.00px;top:470.30px;width:29.20px;height:36.70px;background:#555;"></div>
<div style="left:882.40px;top:476.00px;width:18.40px;height:18.40px;background:#f2f2f2;border-radius:50%;"></div>
<span class="t" style="left:885.47px;top:497.60px;font-size:7.5px;line-height:9.00px;color:#eee;font-family:'Liberation Sans',sans-serif;transform:scaleX(0.9800);">400</span>
<div style="left:907.00px;top:470.30px;width:29.20px;height:36.70px;background:#555;"></div>
<div style="left:912.40px;top:476.00px;width:18.40px;height:18.40px;background:#f2f2f2;border-radius:50%;"></div>
<span class="t" style="left:915.47px;top:497.60px;font-size:7.5px;line-height:9.00px;color:#eee;font-family:'Liberation Sans',sans-serif;transform:scaleX(0.9800);">500</span>
<div style="left:937.00px;top:470.30px;width:29.20px;height:36.70px;background:#555;"></div>
<div style="left:942.40px;top:476.00px;width:18.40px;height:18.40px;background:#f2f2f2;border-radius:50%;"></div>
<span class="t" style="left:945.47px;top:497.60px;font-size:7.5px;line-height:9.00px;color:#eee;font-family:'Liberation Sans',sans-serif;transform:scaleX(0.9800);">700</span>
<div style="left:967.00px;top:470.30px;width:29.20px;height:36.70px;background:#555;"></div>
<div style="left:972.40px;top:476.00px;width:18.40px;height:18.40px;background:#f2f2f2;border-radius:50%;"></div>
<span class="t" style="left:973.42px;top:497.60px;font-size:7.5px;line-height:9.00px;color:#eee;font-family:'Liberation Sans',sans-serif;transform:scaleX(0.9800);">1000</span>
<div style="left:1009.80px;top:393.80px;width:14.20px;height:136.70px;background:#212121;"></div>
<svg style="left:1012.40px;top:395.60px;" width="9.00" height="6.00" viewBox="0 0 9 6"><path d="M1.6 5.2L4.5 .8L7.4 5.2z" fill="#c8c8c8"/></svg>
<div style="left:1010.80px;top:404.00px;width:12.40px;height:117.60px;background:#6e6e6e;border-radius:3px;"></div>
<svg style="left:1012.40px;top:523.00px;" width="9.00" height="6.00" viewBox="0 0 9 6"><path d="M1.6 .8L4.5 5.2L7.4 .8z" fill="#c8c8c8"/></svg>
<div style="left:0.00px;top:530.50px;width:1024.00px;height:15.00px;background:#242424;"></div>
<div style="left:0.00px;top:545.20px;width:1024.00px;height:29.80px;background:linear-gradient(90deg,rgba(12,40,24,.30) 0,rgba(12,40,24,.22) 190px,rgba(12,40,24,0) 340px,rgba(12,40,24,0) 780px,rgba(12,40,24,.34) 850px,rgba(12,40,24,.34) 1010px),radial-gradient(ellipse 23px 11px at 663px 30px,rgba(72,142,92,0.42) 0,rgba(72,142,92,0) 100%),radial-gradient(ellipse 20px 10px at 148px 26px,rgba(72,142,92,0.42) 0,rgba(72,142,92,0) 100%),radial-gradient(ellipse 19px 11px at 439px 1px,rgba(24,74,42,0.55) 0,rgba(24,74,42,0) 100%),radial-gradient(ellipse 41px 5px at 492px 2px,rgba(72,142,92,0.42) 0,rgba(72,142,92,0) 100%),radial-gradient(ellipse 28px 5px at 253px 30px,rgba(72,142,92,0.42) 0,rgba(72,142,92,0) 100%),radial-gradient(ellipse 28px 5px at 812px 1px,rgba(72,142,92,0.42) 0,rgba(72,142,92,0) 100%),radial-gradient(ellipse 40px 7px at 272px 9px,rgba(72,142,92,0.42) 0,rgba(72,142,92,0) 100%),radial-gradient(ellipse 25px 6px at 631px 17px,rgba(72,142,92,0.42) 0,rgba(72,142,92,0) 100%),radial-gradient(ellipse 20px 6px at 384px 11px,rgba(72,142,92,0.42) 0,rgba(72,142,92,0) 100%),radial-gradient(ellipse 41px 10px at 421px 15px,rgba(24,74,42,0.55) 0,rgba(24,74,42,0) 100%),radial-gradient(ellipse 33px 8px at 928px 11px,rgba(72,142,92,0.42) 0,rgba(72,142,92,0) 100%),radial-gradient(ellipse 33px 12px at 499px 2px,rgba(72,142,92,0.42) 0,rgba(72,142,92,0) 100%),radial-gradient(ellipse 18px 6px at 919px 9px,rgba(72,142,92,0.42) 0,rgba(72,142,92,0) 100%),radial-gradient(ellipse 35px 7px at 337px 24px,rgba(72,142,92,0.42) 0,rgba(72,142,92,0) 100%),radial-gradient(ellipse 18px 10px at 863px 1px,rgba(24,74,42,0.55) 0,rgba(24,74,42,0) 100%),radial-gradient(ellipse 45px 12px at 717px 19px,rgba(24,74,42,0.55) 0,rgba(24,74,42,0) 100%),radial-gradient(ellipse 31px 12px at 191px 30px,rgba(72,142,92,0.42) 0,rgba(72,142,92,0) 100%),radial-gradient(ellipse 33px 12px at 133px 1px,rgba(24,74,42,0.55) 0,rgba(24,74,42,0) 100%),radial-gradient(ellipse 36px 5px at 790px 28px,rgba(72,142,92,0.42) 0,rgba(72,142,92,0) 100%),radial-gradient(ellipse 21px 12px at 727px 5px,rgba(24,74,42,0.55) 0,rgba(24,74,42,0) 100%),radial-gradient(ellipse 29px 11px at 588px 4px,rgba(24,74,42,0.55) 0,rgba(24,74,42,0) 100%),radial-gradient(ellipse 24px 12px at 1016px 2px,rgba(24,74,42,0.55) 0,rgba(24,74,42,0) 100%),radial-gradient(ellipse 22px 11px at 569px 28px,rgba(72,142,92,0.42) 0,rgba(72,142,92,0) 100%),radial-gradient(ellipse 40px 10px at 570px 22px,rgba(72,142,92,0.42) 0,rgba(72,142,92,0) 100%),radial-gradient(ellipse 28px 7px at 779px 30px,rgba(24,74,42,0.55) 0,rgba(24,74,42,0) 100%),radial-gradient(ellipse 28px 5px at 309px 7px,rgba(24,74,42,0.55) 0,rgba(24,74,42,0) 100%),radial-gradient(ellipse 32px 5px at 373px 8px,rgba(24,74,42,0.55) 0,rgba(24,74,42,0) 100%),radial-gradient(ellipse 34px 7px at 756px 19px,rgba(72,142,92,0.42) 0,rgba(72,142,92,0) 100%),radial-gradient(ellipse 39px 11px at 110px 14px,rgba(24,74,42,0.55) 0,rgba(24,74,42,0) 100%),radial-gradient(ellipse 39px 5px at 212px 15px,rgba(24,74,42,0.55) 0,rgba(24,74,42,0) 100%),radial-gradient(ellipse 24px 6px at 427px 14px,rgba(24,74,42,0.55) 0,rgba(24,74,42,0) 100%),radial-gradient(ellipse 14px 7px at 107px 3px,rgba(72,142,92,0.42) 0,rgba(72,142,92,0) 100%),radial-gradient(ellipse 15px 6px at 744px 19px,rgba(72,142,92,0.42) 0,rgba(72,142,92,0) 100%),radial-gradient(ellipse 30px 10px at 770px 4px,rgba(72,142,92,0.42) 0,rgba(72,142,92,0) 100%),radial-gradient(ellipse 21px 12px at 971px 3px,rgba(72,142,92,0.42) 0,rgba(72,142,92,0) 100%),radial-gradient(ellipse 44px 9px at 954px 15px,rgba(24,74,42,0.55) 0,rgba(24,74,42,0) 100%),radial-gradient(ellipse 35px 9px at 209px 23px,rgba(24,74,42,0.55) 0,rgba(24,74,42,0) 100%),radial-gradient(ellipse 15px 8px at 330px 16px,rgba(72,142,92,0.42) 0,rgba(72,142,92,0) 100%),radial-gradient(ellipse 15px 9px at 740px 4px,rgba(72,142,92,0.42) 0,rgba(72,142,92,0) 100%),radial-gradient(ellipse 30px 10px at 186px 22px,rgba(72,142,92,0.42) 0,rgba(72,142,92,0) 100%),radial-gradient(ellipse 28px 10px at 728px 24px,rgba(72,142,92,0.42) 0,rgba(72,142,92,0) 100%),radial-gradient(ellipse 29px 11px at 399px 25px,rgba(72,142,92,0.42) 0,rgba(72,142,92,0) 100%),radial-gradient(ellipse 45px 10px at 464px 6px,rgba(72,142,92,0.42) 0,rgba(72,142,92,0) 100%),radial-gradient(ellipse 31px 12px at 57px 25px,rgba(24,74,42,0.55) 0,rgba(24,74,42,0) 100%),radial-gradient(ellipse 36px 10px at 705px 14px,rgba(24,74,42,0.55) 0,rgba(24,74,42,0) 100%),radial-gradient(ellipse 44px 8px at 209px 7px,rgba(24,74,42,0.55) 0,rgba(24,74,42,0) 100%),linear-gradient(#3e8458 0,#2f6e46 45%,#245a38 100%);border-top:1px solid #5f8f72;"></div>
<svg style="left:5.50px;top:546.00px;" width="30.00" height="29.00" viewBox="0 0 30 29"><defs><radialGradient id="orb" cx="50%" cy="92%" r="85%"><stop offset="0" stop-color="#8fe8ff"/><stop offset=".4" stop-color="#2f8ad4"/><stop offset="1" stop-color="#1a447c"/></radialGradient></defs>
<circle cx="15" cy="14.6" r="13.4" fill="url(#orb)" stroke="#9cc4dc" stroke-width=".8" stroke-opacity=".7"/>
<path d="M9.2 9.6c1.6-1 3.400000000000001-1 5-.2l-1 4c-1.6-.8-3.2-.8-5 .2z" fill="#e8542c"/>
<path d="M15.4 9.8c1.6.8 3.2.8 5-.2l-1 4c-1.8 1-3.400000000000001 1-5 .2z" fill="#7cc242"/>
<path d="M8 14.6c1.6-1 3.4-1 5-.2l-1 4c-1.6-.8-3.2-.8-5 .2z" fill="#3a9ae8"/>
<path d="M14.2 14.8c1.6.8 3.2.8 5-.2l-1 4c-1.8 1-3.400000000000001 1-5 .2z" fill="#f8c828"/>
<ellipse cx="15" cy="6" rx="9.4" ry="4.4" fill="#e8fbff" fill-opacity=".5"/></svg>
<svg style="left:43.00px;top:552.00px;" width="6.60" height="19.80" viewBox="0 0 6.6000000000000005 19.8"><rect x="0.0" y="0.0" width="1.1" height="1.1" fill="rgba(20,50,30,.75)"/><rect x="0.0" y="2.2" width="1.1" height="1.1" fill="rgba(20,50,30,.75)"/><rect x="0.0" y="4.4" width="1.1" height="1.1" fill="rgba(20,50,30,.75)"/><rect x="0.0" y="6.6" width="1.1" height="1.1" fill="rgba(20,50,30,.75)"/><rect x="0.0" y="8.8" width="1.1" height="1.1" fill="rgba(20,50,30,.75)"/><rect x="0.0" y="11.0" width="1.1" height="1.1" fill="rgba(20,50,30,.75)"/><rect x="0.0" y="13.2" width="1.1" height="1.1" fill="rgba(20,50,30,.75)"/><rect x="0.0" y="15.4" width="1.1" height="1.1" fill="rgba(20,50,30,.75)"/><rect x="0.0" y="17.6" width="1.1" height="1.1" fill="rgba(20,50,30,.75)"/><rect x="2.2" y="0.0" width="1.1" height="1.1" fill="rgba(20,50,30,.75)"/><rect x="2.2" y="2.2" width="1.1" height="1.1" fill="rgba(20,50,30,.75)"/><rect x="2.2" y="4.4" width="1.1" height="1.1" fill="rgba(20,50,30,.75)"/><rect x="2.2" y="6.6" width="1.1" height="1.1" fill="rgba(20,50,30,.75)"/><rect x="2.2" y="8.8" width="1.1" height="1.1" fill="rgba(20,50,30,.75)"/><rect x="2.2" y="11.0" width="1.1" height="1.1" fill="rgba(20,50,30,.75)"/><rect x="2.2" y="13.2" width="1.1" height="1.1" fill="rgba(20,50,30,.75)"/><rect x="2.2" y="15.4" width="1.1" height="1.1" fill="rgba(20,50,30,.75)"/><rect x="2.2" y="17.6" width="1.1" height="1.1" fill="rgba(20,50,30,.75)"/><rect x="4.4" y="0.0" width="1.1" height="1.1" fill="rgba(20,50,30,.75)"/><rect x="4.4" y="2.2" width="1.1" height="1.1" fill="rgba(20,50,30,.75)"/><rect x="4.4" y="4.4" width="1.1" height="1.1" fill="rgba(20,50,30,.75)"/><rect x="4.4" y="6.6" width="1.1" height="1.1" fill="rgba(20,50,30,.75)"/><rect x="4.4" y="8.8" width="1.1" height="1.1" fill="rgba(20,50,30,.75)"/><rect x="4.4" y="11.0" width="1.1" height="1.1" fill="rgba(20,50,30,.75)"/><rect x="4.4" y="13.2" width="1.1" height="1.1" fill="rgba(20,50,30,.75)"/><rect x="4.4" y="15.4" width="1.1" height="1.1" fill="rgba(20,50,30,.75)"/><rect x="4.4" y="17.6" width="1.1" height="1.1" fill="rgba(20,50,30,.75)"/></svg>
<svg style="left:66.00px;top:550.60px;" width="26.00" height="22.00" viewBox="0 0 26 22"><path d="M1.6 4.2c0-1 .6-1.600000000000001 1.600000000000001-1.600000000000001h5.2l1.6 1.6h12.2c1 0 1.600000000000001.6 1.600000000000001 1.600000000000001V19.6c0 1-.6 1.6-1.6 1.6H3.2c-1 0-1.6-.6-1.6-1.6z" fill="#f2d680" stroke="#c8a850" stroke-width=".7"/>
<path d="M3 7.6h20v3H3z" fill="#f8e8a8"/><rect x="5.6" y="11.6" width="14.6" height="9.4" rx="1.2" fill="#5aa6e2" stroke="#cfe6f8" stroke-width=".9"/><rect x="7.6" y="15.6" width="10.6" height="4" fill="#f0d88a"/><rect x="10" y="1" width="6" height="3" fill="#e8e8e0" stroke="#b8b090" stroke-width=".5"/></svg>
<svg style="left:112.60px;top:548.60px;" width="24.00" height="25.00" viewBox="0 0 24 25"><ellipse cx="10.4" cy="9.6" rx="8.8" ry="7.8" fill="#f6f2f2" stroke="#b0443c" stroke-width="1.5"/><ellipse cx="9" cy="12.6" rx="6.2" ry="3.6" fill="#bcb6b6"/>
<path d="M8 4.4L16.4 17.4" stroke="#8c8c96" stroke-width="1.7"/><path d="M14.6 4.2L10.6 17" stroke="#a0a0aa" stroke-width="1.7"/><path d="M8 4.4L12 10.6M14.6 4.2L12.8 10" stroke="#b8443c" stroke-width=".9"/><circle cx="17.8" cy="20" r="2.6" fill="none" stroke="#4a9cd8" stroke-width="1.6"/><circle cx="10.6" cy="20.2" r="2.6" fill="none" stroke="#4a9cd8" stroke-width="1.6"/></svg>
<svg style="left:159.60px;top:551.40px;" width="24.00" height="20.00" viewBox="0 0 24 20"><rect x=".8" y=".8" width="8" height="8" rx="1" fill="#f2eeee" stroke="#c8c0c0" stroke-width=".6"/><rect x="3.4" y="2.4" width="2.8" height="4.4" fill="#c8283c"/>
<rect x="12.6" y=".4" width="8.6" height="8.6" rx="1" fill="#f2eeee" stroke="#c8c0c0" stroke-width=".6"/><rect x="16" y="2.4" width="2" height="4.4" fill="#c8283c"/>
<rect x="6.4" y="9.8" width="9.4" height="9.2" rx="1" fill="#f2eeee" stroke="#c8c0c0" stroke-width=".6"/><rect x="9.4" y="12" width="3.4" height="4.6" fill="#c8283c"/></svg>
<div style="left:196.40px;top:546.40px;width:43.40px;height:28.80px;background:linear-gradient(rgba(255,255,255,.50),rgba(255,255,255,.34));border:1px solid rgba(255,255,255,.75);border-bottom:none;border-radius:2px 2px 0 0;"></div>
<svg style="left:206.20px;top:548.80px;" width="24.00" height="24.00" viewBox="0 0 24 24"><rect x=".4" y=".4" width="23.2" height="23.2" rx="4.6" fill="#f4f2ee"/>
<path d="M13.6 3.6C19 8 20 12.4 18.4 15.8 16.6 19.6 11 20.6 7.8 17.6 4.6 14.4 6 9.6 13.6 3.6z" fill="#18a896"/>
<path d="M13.6 3.6C10 6.4 6.6 9.4 6.2 12.6L12.6 10.2C13.8 8 14.2 5.8 13.6 3.600000000000001z" fill="#e8382c"/>
<path d="M6.2 12.6L12.6 10.2C12 12 10.6 13.600000000000001 8.4 14.6L6.4 15.2C6 14.4 6 13.6 6.2 12.6z" fill="#f29a24"/>
<path d="M6.4 15.2L10.4 13.6C10.8 15.6 10.4 17.4 9.4 18.6 8 17.8 7 16.6 6.4 15.2z" fill="#6cbc3c"/>
<path d="M14 8C16.6 10.4 17.4 13.4 16 16.2" fill="none" stroke="#2e8ed8" stroke-width="2.2" stroke-opacity=".7"/></svg>
<svg style="left:253.40px;top:548.00px;" width="26.00" height="26.00" viewBox="0 0 26 26"><path d="M3 6.6C3 3.400000000000001 5 1.6 8.2 1.6H18C21.2 1.6 23.2 3.4 23.2 6.6V16c0 3.2-2 5-5.2 5H8.4L4.2 24.2 5 20.4C3.600000000000001 19.400000000000002 3 18 3 16z" fill="#fdfdfe"/>
<path d="M3 14c0 3 .6 5 2 6.4L4.2 24.200000000000003 8.4 21H14C9 21 4.6 19 3 14z" fill="#2a6ae0"/>
<text x="13.2" y="13.8" font-family="Liberation Sans,sans-serif" font-weight="bold" font-size="8.4" fill="#2566d6" text-anchor="middle">Zalo</text></svg>
<div style="left:290.00px;top:546.40px;width:43.00px;height:28.80px;background:linear-gradient(rgba(255,255,255,.26),rgba(255,255,255,.12));border:1px solid rgba(255,255,255,.42);border-bottom:none;border-radius:2px 2px 0 0;"></div>
<svg style="left:300.00px;top:549.20px;" width="24.00" height="24.00" viewBox="0 0 24 24"><circle cx="12" cy="12" r="11" fill="#fff"/>
<path d="M12 12L2.47 6.5A11 11 0 0 1 21.53 6.5z" fill="#e2412f"/>
<path d="M12 12L21.53 6.5A11 11 0 0 1 12 23z" fill="#f8c81c"/>
<path d="M12 12L12 23A11 11 0 0 1 2.47 6.5z" fill="#2ea24c"/>
<path d="M12 7h9.8" stroke="#e2412f" stroke-width="0"/>
<circle cx="12" cy="12" r="5.2" fill="#f4f4f4"/><circle cx="12" cy="12" r="4" fill="#4a86e8"/></svg>
<svg style="left:816.60px;top:553.00px;" width="6.60" height="19.80" viewBox="0 0 6.6000000000000005 19.8"><rect x="0.0" y="0.0" width="1.1" height="1.1" fill="rgba(20,50,30,.75)"/><rect x="0.0" y="2.2" width="1.1" height="1.1" fill="rgba(20,50,30,.75)"/><rect x="0.0" y="4.4" width="1.1" height="1.1" fill="rgba(20,50,30,.75)"/><rect x="0.0" y="6.6" width="1.1" height="1.1" fill="rgba(20,50,30,.75)"/><rect x="0.0" y="8.8" width="1.1" height="1.1" fill="rgba(20,50,30,.75)"/><rect x="0.0" y="11.0" width="1.1" height="1.1" fill="rgba(20,50,30,.75)"/><rect x="0.0" y="13.2" width="1.1" height="1.1" fill="rgba(20,50,30,.75)"/><rect x="0.0" y="15.4" width="1.1" height="1.1" fill="rgba(20,50,30,.75)"/><rect x="0.0" y="17.6" width="1.1" height="1.1" fill="rgba(20,50,30,.75)"/><rect x="2.2" y="0.0" width="1.1" height="1.1" fill="rgba(20,50,30,.75)"/><rect x="2.2" y="2.2" width="1.1" height="1.1" fill="rgba(20,50,30,.75)"/><rect x="2.2" y="4.4" width="1.1" height="1.1" fill="rgba(20,50,30,.75)"/><rect x="2.2" y="6.6" width="1.1" height="1.1" fill="rgba(20,50,30,.75)"/><rect x="2.2" y="8.8" width="1.1" height="1.1" fill="rgba(20,50,30,.75)"/><rect x="2.2" y="11.0" width="1.1" height="1.1" fill="rgba(20,50,30,.75)"/><rect x="2.2" y="13.2" width="1.1" height="1.1" fill="rgba(20,50,30,.75)"/><rect x="2.2" y="15.4" width="1.1" height="1.1" fill="rgba(20,50,30,.75)"/><rect x="2.2" y="17.6" width="1.1" height="1.1" fill="rgba(20,50,30,.75)"/><rect x="4.4" y="0.0" width="1.1" height="1.1" fill="rgba(20,50,30,.75)"/><rect x="4.4" y="2.2" width="1.1" height="1.1" fill="rgba(20,50,30,.75)"/><rect x="4.4" y="4.4" width="1.1" height="1.1" fill="rgba(20,50,30,.75)"/><rect x="4.4" y="6.6" width="1.1" height="1.1" fill="rgba(20,50,30,.75)"/><rect x="4.4" y="8.8" width="1.1" height="1.1" fill="rgba(20,50,30,.75)"/><rect x="4.4" y="11.0" width="1.1" height="1.1" fill="rgba(20,50,30,.75)"/><rect x="4.4" y="13.2" width="1.1" height="1.1" fill="rgba(20,50,30,.75)"/><rect x="4.4" y="15.4" width="1.1" height="1.1" fill="rgba(20,50,30,.75)"/><rect x="4.4" y="17.6" width="1.1" height="1.1" fill="rgba(20,50,30,.75)"/></svg>
<svg style="left:851.60px;top:554.00px;" width="12.00" height="14.00" viewBox="0 0 12 14"><path d="M1.6 5.4h2.6L8.8 1.2v11.6L4.2 8.6H1.6z" fill="#b4583c" stroke="#e8b8a0" stroke-width=".6"/><path d="M9.6 4.6c1 1.6 1 3.2 0 4.8" stroke="#e8c8b0" stroke-width=".8" fill="none"/></svg>
<svg style="left:869.00px;top:554.00px;" width="15.00" height="14.00" viewBox="0 0 15 14"><circle cx="8.6" cy="5.6" r="4.4" fill="#3a9c34"/><circle cx="7.6" cy="4.4" r="1.8" fill="#c8f0b0"/><path d="M1 8.6L7 5.4V7.4H12V10H7v2z" fill="#c8e03c" stroke="#5a8a1c" stroke-width=".5"/></svg>
<svg style="left:887.60px;top:554.00px;" width="15.00" height="14.00" viewBox="0 0 15 14"><circle cx="4.4" cy="9.4" r="3.4" fill="#2036d8"/><circle cx="10.6" cy="9.4" r="3.4" fill="#d82034"/><circle cx="5.6" cy="3.4" r="2" fill="#2848e0"/><circle cx="9.4" cy="3.4" r="2" fill="#3050e0"/><path d="M7.5 5v7" stroke="#101838" stroke-width="1"/></svg>
<svg style="left:906.60px;top:554.60px;" width="13.00" height="13.00" viewBox="0 0 13 13"><rect x="2.4" y="3.4" width="9" height="6.6" fill="#1c2c3c" stroke="#e8ecf0" stroke-width="1.1"/><path d="M5 12h4" stroke="#e8ecf0" stroke-width="1.2"/><circle cx="3" cy="3" r="1.8" fill="#e8ecf0"/></svg>
<div style="left:925.00px;top:555.40px;width:11.60px;height:11.60px;background:#f6e6e6;border:1px solid #e8c0c0;"></div>
<span class="t" style="left:927.40px;top:555.40px;font-size:10px;line-height:12.00px;color:#cc2030;font-family:'Liberation Sans',sans-serif;transform:scaleX(1.0000);font-weight:bold;">V</span>
<svg style="left:943.60px;top:555.40px;" width="12.00" height="12.00" viewBox="0 0 12 12"><rect x=".6" y="1" width="10.8" height="8" fill="#1c2c5c"/><rect x="1.6" y="2" width="4" height="3" fill="#6cb4f0"/><rect x="6.6" y="4" width="3.4" height="3" fill="#e8ecf4"/><path d="M3 10.6h6" stroke="#c8d0e0" stroke-width="1.2"/></svg>
<span class="t" style="left:968.00px;top:550.40px;font-size:9px;line-height:10.80px;color:#fff;font-family:'Liberation Sans',sans-serif;transform:scaleX(1.0038);">11:35 AM</span>
<span class="t" style="left:969.40px;top:562.50px;font-size:9px;line-height:10.80px;color:#fff;font-family:'Liberation Sans',sans-serif;transform:scaleX(0.9819);">9/5/2021</span>
<div style="left:1013.60px;top:546.20px;width:10.40px;height:28.80px;background:linear-gradient(90deg,rgba(255,255,255,.38),rgba(255,255,255,.14));border-left:1px solid rgba(255,255,255,.5);"></div>
</div></body></html>
